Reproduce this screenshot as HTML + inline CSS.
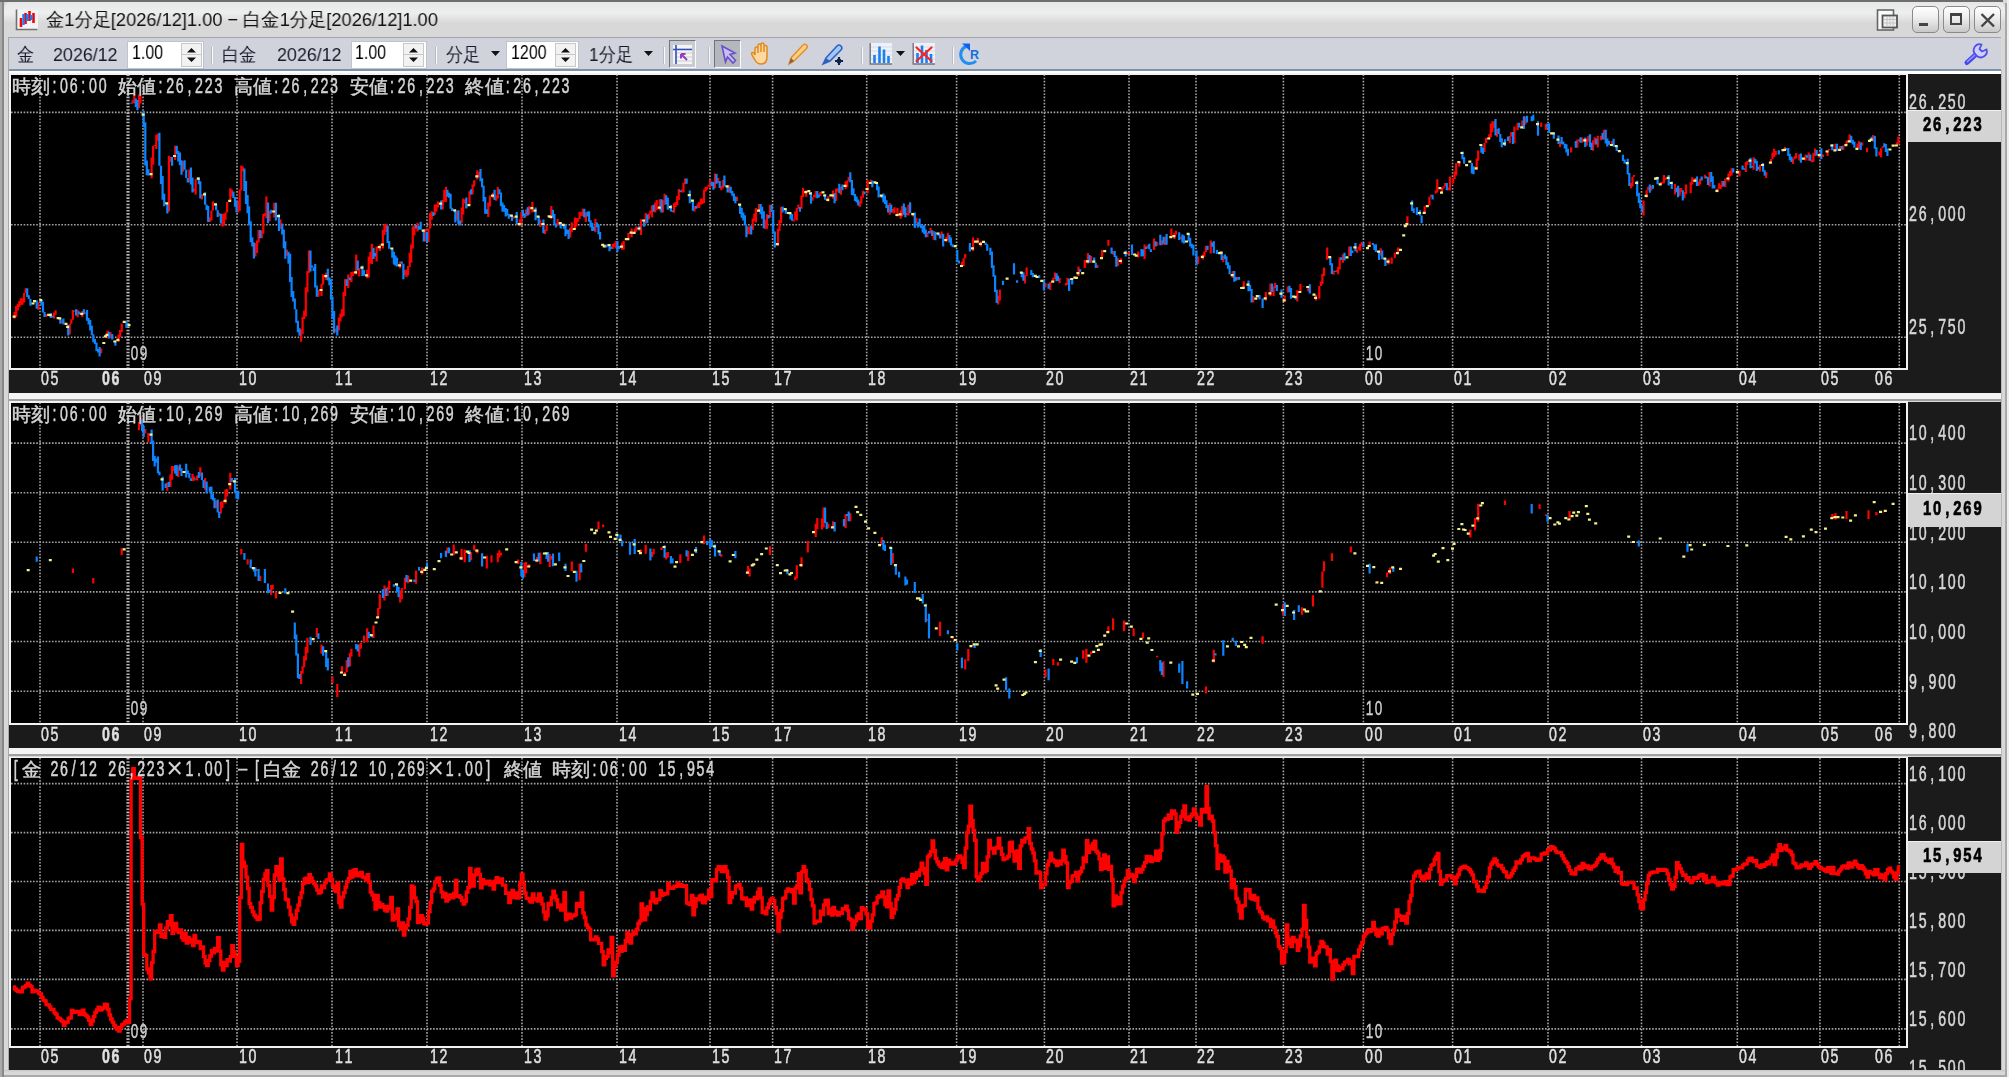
<!DOCTYPE html><html><head><meta charset="utf-8"><style>
*{margin:0;padding:0;box-sizing:border-box}
html,body{width:2009px;height:1080px;overflow:hidden;background:#fff;font-family:"Liberation Sans", sans-serif}
.a{position:absolute}
.mt{position:absolute;white-space:nowrap;font-family:"Liberation Sans", sans-serif;line-height:1;transform-origin:0 0;will-change:transform}
.mt i{display:inline-block;font-style:normal;text-align:center}
.tb{position:absolute;white-space:nowrap;font-family:"Liberation Sans", sans-serif;line-height:1;transform-origin:0 0;will-change:transform}
</style></head><body><div class="a" style="left:0;top:0;width:2009px;height:1077px;background:#d8d8d8"></div><div class="a" style="left:0;top:0;width:1.5px;height:1077px;background:#aaa"></div><div class="a" style="left:1.5px;top:0;width:2px;height:1077px;background:#888"></div><div class="a" style="left:7.5px;top:37px;width:1.2px;height:1036px;background:#a8a8a8"></div><div class="a" style="left:0;top:0;width:2003px;height:2px;background:#6e6e6e"></div><div class="a" style="left:0;top:1075px;width:2009px;height:2px;background:#a8a8a8"></div><div class="a" style="left:2004.5px;top:3px;width:2px;height:1074px;background:#a8a8a8"></div><div class="a" style="left:2006.5px;top:0;width:2.5px;height:1080px;background:#eceef2"></div><div class="a" style="left:2000px;top:70px;width:2px;height:1000px;background:#b8b8b8"></div><div class="a" style="left:3.5px;top:2px;width:2001px;height:35px;border-radius:6px 6px 0 0;background:linear-gradient(#e6e8e8 0px,#eeeeee 11px,#e4e4e4 16px,#d8d8d8 21px,#d8d8d8 35px)"></div><div class="a" style="left:9px;top:36.5px;width:1992px;height:1.2px;background:#a4a4a4"></div><div class="a" style="left:9px;top:37.7px;width:1992px;height:31.3px;background:#d0d3dc"></div><div class="a" style="left:9px;top:69px;width:1992px;height:1.8px;background:#8090a8"></div><div class="a" style="left:9px;top:70.8px;width:1992px;height:3.5px;background:#fff"></div><svg class="a" style="left:15px;top:8px" width="24" height="24" viewBox="0 0 24 24"><rect x="2" y="2" width="21" height="20" fill="#f4f4f4"/><path d="M1.5 1.5V21.5H22.5" stroke="#707070" stroke-width="1.6" fill="none"/><path d="M6 10V19M10.5 5V16M14.5 3V13M18.5 5V15" stroke="#ff0000" stroke-width="2.6"/><path d="M8.5 6V17M12.5 6V13M16.5 7V12" stroke="#0a84ff" stroke-width="2.4"/></svg><div class="tb" style="left:46px;top:9.5px;font-size:19px;color:#111;transform:scaleX(0.96)">金1分足[2026/12]1.00 &#8722; 白金1分足[2026/12]1.00</div><svg class="a" style="left:1875px;top:7px" width="28" height="26" viewBox="0 0 28 26"><rect x="2.5" y="3" width="16" height="20" fill="#fafafa" stroke="#666" stroke-width="1.6"/><rect x="7.5" y="8.5" width="14.5" height="12" fill="#eee" stroke="#555" stroke-width="1.8"/><path d="M9 12.5h12M9 16h12M12 10v10M15 10v10M18 10v10" stroke="#bbb" stroke-width="0.8"/></svg><div class="a" style="left:1911.5px;top:6px;width:27px;height:27px;border:1.3px solid #8a8a8a;border-radius:5px;background:linear-gradient(#ffffff,#f0f0f0 40%,#c8c8c8)"></div><div class="a" style="left:1919.0px;top:22.5px;width:9px;height:3px;background:#444"></div><div class="a" style="left:1942.6px;top:6px;width:27px;height:27px;border:1.3px solid #8a8a8a;border-radius:5px;background:linear-gradient(#ffffff,#f0f0f0 40%,#c8c8c8)"></div><div class="a" style="left:1949.8px;top:12.5px;width:12.5px;height:12px;border:2px solid #444;border-top-width:3px"></div><div class="a" style="left:1974px;top:6px;width:27px;height:27px;border:1.3px solid #8a8a8a;border-radius:5px;background:linear-gradient(#ffffff,#f0f0f0 40%,#c8c8c8)"></div><svg class="a" style="left:1974px;top:6px" width="27" height="27" viewBox="0 0 27 27"><path d="M7.5 8L20 20.5M20 8L7.5 20.5" stroke="#444" stroke-width="2.4"/></svg><div class="tb" style="left:17px;top:45px;font-size:19px;color:#1a1a2a;transform:scaleX(0.9)">金</div><div class="tb" style="left:53px;top:45px;font-size:19px;color:#1a1a2a;transform:scaleX(0.94)">2026/12</div><div class="a" style="left:127px;top:41px;width:77px;height:27.5px;background:#fff;border:1.2px solid #c0c4cc"></div><div class="tb" style="left:131.5px;top:42.5px;font-size:19.5px;color:#000;transform:scaleX(0.82)">1.00</div><div class="a" style="left:180.5px;top:43px;width:21px;height:23.5px;background:#f2f2f2;border:1.2px solid #c8c8c8"></div><div class="a" style="left:181.5px;top:54.3px;width:19px;height:1.2px;background:#c8c8c8"></div><svg class="a" style="left:180.5px;top:43px" width="21" height="24" viewBox="0 0 21 24"><path d="M6 9.5L10.5 5L15 9.5Z M6 14.5L10.5 19L15 14.5Z" fill="#111"/></svg><div class="a" style="left:211px;top:47px;width:1.2px;height:17px;background:#b8bcc4"></div><div class="a" style="left:212.2px;top:47px;width:1.2px;height:17px;background:#fafafa"></div><div class="tb" style="left:222px;top:45px;font-size:19px;color:#1a1a2a;transform:scaleX(0.9)">白金</div><div class="tb" style="left:277px;top:45px;font-size:19px;color:#1a1a2a;transform:scaleX(0.94)">2026/12</div><div class="a" style="left:350.5px;top:41px;width:76px;height:27.5px;background:#fff;border:1.2px solid #c0c4cc"></div><div class="tb" style="left:355.0px;top:42.5px;font-size:19.5px;color:#000;transform:scaleX(0.82)">1.00</div><div class="a" style="left:403.0px;top:43px;width:21px;height:23.5px;background:#f2f2f2;border:1.2px solid #c8c8c8"></div><div class="a" style="left:404.0px;top:54.3px;width:19px;height:1.2px;background:#c8c8c8"></div><svg class="a" style="left:403.0px;top:43px" width="21" height="24" viewBox="0 0 21 24"><path d="M6 9.5L10.5 5L15 9.5Z M6 14.5L10.5 19L15 14.5Z" fill="#111"/></svg><div class="a" style="left:435px;top:47px;width:1.2px;height:17px;background:#b8bcc4"></div><div class="a" style="left:436.2px;top:47px;width:1.2px;height:17px;background:#fafafa"></div><div class="tb" style="left:446px;top:45px;font-size:19px;color:#1a1a2a;transform:scaleX(0.9)">分足</div><svg class="a" style="left:491px;top:51px" width="9" height="6" viewBox="0 0 9 6"><path d="M0 0H9L4.5 5Z" fill="#111"/></svg><div class="a" style="left:506px;top:41px;width:72.5px;height:27.5px;background:#fff;border:1.2px solid #c0c4cc"></div><div class="tb" style="left:510.5px;top:42.5px;font-size:19.5px;color:#000;transform:scaleX(0.82)">1200</div><div class="a" style="left:555.0px;top:43px;width:21px;height:23.5px;background:#f2f2f2;border:1.2px solid #c8c8c8"></div><div class="a" style="left:556.0px;top:54.3px;width:19px;height:1.2px;background:#c8c8c8"></div><svg class="a" style="left:555.0px;top:43px" width="21" height="24" viewBox="0 0 21 24"><path d="M6 9.5L10.5 5L15 9.5Z M6 14.5L10.5 19L15 14.5Z" fill="#111"/></svg><div class="tb" style="left:589px;top:45px;font-size:19px;color:#1a1a2a;transform:scaleX(0.9)">1分足</div><svg class="a" style="left:644px;top:51px" width="9" height="6" viewBox="0 0 9 6"><path d="M0 0H9L4.5 5Z" fill="#111"/></svg><div class="a" style="left:663px;top:47px;width:1.2px;height:17px;background:#b8bcc4"></div><div class="a" style="left:664.2px;top:47px;width:1.2px;height:17px;background:#fafafa"></div><div class="a" style="left:669px;top:40px;width:27px;height:28px;background:#c8cbd2;border-top:1.6px solid #707478;border-left:1.6px solid #707478;border-bottom:1.2px solid #fafafa;border-right:1.2px solid #fafafa"></div><svg class="a" style="left:669px;top:40.5px" width="27" height="27" viewBox="0 0 27 27"><rect x="4" y="4" width="19" height="19" fill="#f4f4f4"/><path d="M6 8H23M6 12H23M6 16H23M6 20H23" stroke="#c8c8c8" stroke-width="0.9"/><path d="M7 4V23M4 8.5H23" stroke="#3050c0" stroke-width="1.6"/><path d="M12 13L18 19M12 13V17.5M12 13H16.5" stroke="#9040c0" stroke-width="2" fill="none"/></svg><div class="a" style="left:708px;top:47px;width:1.2px;height:17px;background:#b8bcc4"></div><div class="a" style="left:709.2px;top:47px;width:1.2px;height:17px;background:#fafafa"></div><div class="a" style="left:714px;top:40px;width:27px;height:28px;background:#b4b8be;border-top:1.6px solid #707478;border-left:1.6px solid #707478;border-bottom:1.2px solid #fafafa;border-right:1.2px solid #fafafa"></div><svg class="a" style="left:714px;top:40.5px" width="27" height="27" viewBox="0 0 27 27"><path d="M8 5L21 12L16 13.5L21.5 19.5L19 22L13.5 16L11.5 21Z" fill="#c8c0f4" stroke="#6a50c8" stroke-width="1.6"/></svg><svg class="a" style="left:749px;top:40px" width="26" height="28" viewBox="0 0 26 28"><path d="M6 15V9Q6 7 7.5 7Q9 7 9 9V13V6Q9 4 10.5 4Q12 4 12 6V12V5Q12 3 13.5 3Q15 3 15 5V12V7Q15 5.5 16.5 5.5Q18 5.5 18 7V17Q18 24 12 24Q8 24 6 20L3 15Q2 13 3.5 12.5Q5 12 6 15Z" fill="#ffd8a0" stroke="#e08a20" stroke-width="1.5"/></svg><svg class="a" style="left:785px;top:40px" width="26" height="28" viewBox="0 0 26 28"><path d="M4 24L6 18L18 5Q20 3.5 21.5 5Q23 6.5 21.5 8.5L9 21Z" fill="#ffd080" stroke="#e09030" stroke-width="1.5"/><path d="M4 24L6 18L9 21Z" fill="#806040"/></svg><svg class="a" style="left:820px;top:40px" width="28" height="28" viewBox="0 0 28 28"><path d="M3 24L6 18L17 6Q19 4 21 6Q23 8 21 10L10 21Z" fill="#a0c8f8" stroke="#3060c0" stroke-width="1.5"/><path d="M3 24L6 18L10 21Z" fill="#3060c0"/><path d="M19 17V25M15 21H23" stroke="#102050" stroke-width="2.2"/><path d="M17 19h4v4h-4z" fill="#102050"/></svg><div class="a" style="left:861px;top:47px;width:1.2px;height:17px;background:#b8bcc4"></div><div class="a" style="left:862.2px;top:47px;width:1.2px;height:17px;background:#fafafa"></div><svg class="a" style="left:869px;top:41px" width="24" height="26" viewBox="0 0 24 26"><rect x="1" y="2" width="22" height="21" fill="#eef2f8"/><path d="M2 6H23M2 10H23M2 14H23M2 18H23" stroke="#d0d4dc" stroke-width="0.8"/><path d="M1.2 2V23H23" stroke="#707480" stroke-width="1.4" fill="none"/><path d="M5.5 22V14M10.5 22V5.5M15 22V8.5M19.5 22V15" stroke="#1a80f0" stroke-width="2.6"/></svg><svg class="a" style="left:896px;top:51px" width="9" height="6" viewBox="0 0 9 6"><path d="M0 0H9L4.5 5Z" fill="#111"/></svg><svg class="a" style="left:912px;top:41px" width="24" height="26" viewBox="0 0 24 26"><rect x="1" y="2" width="22" height="21" fill="#eef2f8"/><path d="M2 6H23M2 10H23M2 14H23M2 18H23" stroke="#d0d4dc" stroke-width="0.8"/><path d="M1.2 2V23H23" stroke="#707480" stroke-width="1.4" fill="none"/><path d="M5.5 22V12M10 22V4.5M14.5 22V9M19 22V13" stroke="#1a80f0" stroke-width="2.6"/><path d="M4.5 6.5L19.5 20M19.5 6.5L4.5 20" stroke="#ff2020" stroke-width="2.2" stroke-linecap="round"/></svg><div class="a" style="left:952px;top:47px;width:1.2px;height:17px;background:#b8bcc4"></div><div class="a" style="left:953.2px;top:47px;width:1.2px;height:17px;background:#fafafa"></div><svg class="a" style="left:957px;top:41px" width="26" height="26" viewBox="0 0 26 26"><path d="M10 5A9 9 0 1 0 19 20" stroke="#2090f0" stroke-width="3" fill="none"/><path d="M5 2.5H13V10Z" fill="#1060f0"/><text x="13" y="17.5" font-family="Liberation Sans" font-weight="bold" font-size="12.5" fill="#1070e0">R</text></svg><svg class="a" style="left:1962px;top:41px" width="28" height="26" viewBox="0 0 28 26"><path d="M5 21.5L15 12.5" stroke="#4848f0" stroke-width="5" stroke-linecap="round"/><path d="M5.5 20.5L14 13" stroke="#9898ff" stroke-width="1.6" stroke-linecap="round"/><path d="M13.5 13.5A6 6 0 0 1 19.5 3.5L17.5 8L20 10.5L24.5 8.5A6 6 0 0 1 15 15Z" fill="#d0d0ff" stroke="#5050e8" stroke-width="1.8"/></svg><div class="a" style="left:9px;top:73.5px;width:1992px;height:319.3px;background:#1b1b1b"></div><div class="a" style="left:9.3px;top:73.0px;width:1898.3px;height:296.8px;background:#f2f2f2"></div><div class="a" style="left:11px;top:74.5px;width:1895px;height:293.8px;background:#000"></div><svg class="a" style="left:0;top:0" width="2009" height="1080" viewBox="0 0 2009 1080"><defs><clipPath id="c74"><rect x="11" y="74.5" width="1895" height="293.8"/></clipPath></defs><g clip-path="url(#c74)"><path d="M40 74.5V368.3 M143 74.5V368.3 M237 74.5V368.3 M332 74.5V368.3 M427 74.5V368.3 M522 74.5V368.3 M617 74.5V368.3 M710 74.5V368.3 M772.6 74.5V368.3 M866.7 74.5V368.3 M956.6 74.5V368.3 M1044.4 74.5V368.3 M1129 74.5V368.3 M1196 74.5V368.3 M1283.4 74.5V368.3 M1363.4 74.5V368.3 M1452.6 74.5V368.3 M1548 74.5V368.3 M1641.5 74.5V368.3 M1737.3 74.5V368.3 M1819.9 74.5V368.3 M1899.3 74.5V368.3 M11 112.4H1906 M11 224.8H1906 M11 337.2H1906" stroke="#a4a4a4" stroke-width="1.6" stroke-dasharray="1.6 1.55" fill="none"/><path d="M128 74.5V368.3" stroke="#b4b4b4" stroke-width="3.2" stroke-dasharray="1.6 1.55" fill="none"/><path d="M14.6 312.0V318.4M16.2 306.1V317.0M17.8 303.8V310.5M19.4 301.1V307.1M20.9 298.2V304.9M22.5 298.2V304.8M24.1 292.9V302.6M25.7 288.2V292.9M35.1 300.3V302.3M38.3 302.2V309.8M46.1 314.0V317.1M54.0 312.6V318.6M55.6 310.3V314.8M61.9 320.2V323.2M69.7 323.7V334.4M71.3 319.2V323.7M72.9 310.1V319.7M77.6 309.8V317.2M82.3 310.9V317.1M85.5 312.3V314.3M101.2 348.4V353.2M107.5 330.6V338.2M110.6 332.2V337.9M118.5 334.7V342.0M120.1 330.1V336.9M121.7 323.6V332.3M132.7 100.2V103.5M134.3 94.6V103.2M139.0 94.6V108.3M140.5 95.8V103.6M151.6 157.6V178.2M153.1 145.9V164.6M154.7 144.9V145.9M156.3 134.7V148.9M157.9 133.7V140.7M168.9 155.7V211.6M170.4 157.1V161.7M175.2 145.8V160.0M183.0 161.3V171.7M189.3 169.4V182.4M194.1 188.7V191.5M195.6 179.2V194.7M201.9 194.3V199.6M209.8 217.6V221.9M211.4 210.4V220.6M212.9 201.4V210.4M219.2 212.7V216.0M222.4 213.8V226.6M224.0 213.8V225.8M225.5 212.4V219.8M227.1 202.1V212.4M230.3 188.2V200.8M231.8 189.5V196.2M238.1 200.8V212.4M239.7 189.6V210.8M241.3 165.6V190.6M242.8 166.6V171.6M255.4 243.1V256.4M257.0 240.4V253.1M258.6 230.0V242.4M261.7 230.8V238.2M263.3 214.1V233.8M264.9 213.3V216.1M266.4 196.6V218.3M269.6 210.8V221.3M274.3 202.8V217.5M280.6 219.6V229.0M286.9 249.7V255.7M301.1 329.2V341.7M302.6 316.9V334.2M304.2 310.5V318.9M305.8 287.2V316.5M307.4 271.0V292.2M308.9 250.6V273.0M318.4 290.0V296.8M321.5 283.8V296.0M323.1 274.2V284.8M326.2 272.7V280.1M335.7 328.4V332.2M338.8 317.5V330.5M340.4 313.6V321.5M342.0 308.9V317.6M343.6 291.9V315.9M345.1 279.2V295.9M348.3 274.4V288.0M351.4 272.1V282.2M353.0 271.6V276.1M356.2 254.6V274.4M359.3 268.0V276.5M367.2 269.8V278.3M368.7 256.4V277.8M370.3 252.0V263.4M371.9 243.7V264.0M376.6 246.4V261.5M379.8 244.4V251.1M382.9 229.9V248.6M384.5 224.1V234.9M386.1 223.7V232.1M400.2 261.6V268.3M404.9 270.3V275.3M406.5 269.5V277.3M408.1 265.9V275.5M409.7 252.7V266.9M411.2 244.5V262.7M412.8 226.6V248.5M414.4 225.1V235.6M417.5 222.8V231.5M425.4 229.0V241.6M428.5 228.5V242.1M430.1 212.7V228.5M431.7 211.2V219.7M434.8 204.6V214.9M436.4 204.4V211.6M438.0 201.5V207.4M442.7 199.9V209.5M444.3 190.0V201.9M445.9 186.8V202.0M456.9 211.2V220.4M461.6 207.5V223.5M463.2 198.6V214.5M464.7 199.6V203.6M469.5 191.3V205.1M472.6 184.5V194.6M474.2 180.3V186.5M477.3 170.2V179.4M478.9 172.1V177.2M488.3 202.6V217.1M489.9 195.6V206.4M493.1 192.7V198.6M496.2 195.6V200.7M497.8 187.0V198.6M513.5 216.3V218.7M519.8 219.2V226.3M521.4 211.9V223.0M526.1 209.4V216.5M529.3 206.2V214.6M532.4 201.9V212.6M540.3 219.7V227.1M545.0 229.6V234.0M546.6 225.1V231.1M551.3 206.1V219.1M557.6 219.1V226.0M570.2 227.7V237.6M571.8 222.3V232.2M574.9 217.6V229.0M576.5 218.0V226.6M578.0 218.2V221.8M579.6 211.8V219.0M581.2 211.8V216.3M582.8 208.8V216.3M585.9 212.4V222.0M595.4 218.9V232.2M604.8 244.6V246.4M612.7 244.0V249.0M614.2 243.2V247.0M615.8 241.1V248.4M622.1 242.6V249.7M623.7 241.0V249.4M628.4 232.9V239.8M631.6 228.6V237.2M634.7 228.8V232.8M636.3 226.6V231.8M641.0 219.3V235.1M645.7 212.9V223.8M648.9 213.5V219.3M650.4 210.5V214.2M652.0 205.6V217.2M655.2 202.4V212.5M656.7 199.9V209.9M659.9 199.3V210.6M663.0 200.3V212.4M664.6 193.8V204.8M674.0 203.2V212.7M675.6 202.0V206.9M677.2 196.1V205.0M678.8 188.9V199.9M681.9 189.4V192.2M683.5 182.7V192.4M685.1 178.5V184.2M694.5 205.9V211.5M697.7 203.6V207.9M699.2 201.7V208.1M700.8 198.7V204.7M702.4 198.6V204.0M704.0 189.4V203.1M705.5 186.8V191.7M707.1 186.8V189.8M708.7 184.7V186.8M710.2 179.4V187.7M715.0 173.4V188.3M718.1 177.9V182.9M721.3 186.1V190.2M722.8 180.0V188.4M729.1 185.2V192.5M737.0 196.8V201.1M748.0 226.7V234.2M749.6 226.2V234.2M752.7 218.6V229.9M754.3 213.4V220.9M755.9 208.1V222.4M759.0 204.1V211.5M765.3 219.8V229.0M766.9 214.3V228.8M770.0 204.7V217.8M777.9 228.7V245.7M779.5 219.9V231.0M781.1 207.1V222.9M793.7 219.4V221.5M795.2 211.4V219.4M796.8 208.1V220.4M798.4 204.6V208.8M801.5 195.5V208.8M803.1 188.1V197.0M806.2 190.2V196.7M812.5 196.9V200.8M814.1 194.7V196.9M815.7 190.9V197.7M820.4 192.0V196.1M828.3 196.3V201.4M833.0 190.6V198.5M836.1 188.8V201.0M837.7 188.2V191.8M840.9 186.7V194.8M845.6 181.3V188.9M847.2 180.6V187.3M848.7 176.7V181.3M859.8 201.2V207.1M861.3 196.2V203.4M862.9 190.8V197.7M867.6 180.0V193.5M870.8 179.8V183.0M889.7 203.1V214.8M892.8 208.9V212.6M894.4 207.3V213.4M897.5 208.1V216.5M900.7 210.6V218.8M902.2 205.9V216.6M907.0 213.1V215.0M908.5 204.6V215.4M913.3 213.1V216.4M916.4 217.7V223.6M927.4 232.6V237.2M930.6 228.0V233.6M933.7 231.0V239.8M941.6 231.5V238.4M946.3 237.1V242.2M947.9 232.8V240.1M962.0 261.7V266.0M963.6 258.2V265.9M965.2 254.1V258.2M973.1 237.5V251.1M977.8 238.0V243.6M980.9 241.6V246.6M998.2 295.7V304.5M999.8 289.4V300.6M1025.0 275.3V283.6M1026.6 267.6V276.0M1045.5 282.7V287.6M1050.2 281.9V290.1M1053.3 277.7V281.7M1054.9 272.6V279.1M1059.6 277.8V283.0M1065.9 283.0V285.5M1067.5 278.1V285.1M1078.5 266.5V276.0M1084.8 260.0V267.9M1087.9 253.0V263.5M1091.1 255.9V262.7M1097.4 264.9V267.9M1102.1 250.1V258.2M1108.4 240.1V245.8M1113.1 250.9V254.5M1117.8 258.1V266.1M1121.0 258.2V263.8M1127.3 252.6V254.4M1128.9 251.7V254.0M1138.3 251.5V257.4M1144.6 244.6V259.1M1147.7 245.2V248.3M1154.0 238.4V250.0M1157.2 241.9V245.7M1161.9 240.2V245.3M1165.1 236.7V244.9M1171.4 228.5V237.1M1174.5 233.1V239.0M1176.1 230.8V234.5M1180.8 236.7V239.3M1198.1 256.4V264.1M1202.8 254.6V259.6M1204.4 251.4V256.7M1206.0 245.7V252.1M1210.7 240.4V253.4M1223.3 255.8V262.2M1232.7 270.9V277.9M1237.5 277.1V280.1M1243.7 281.2V287.9M1253.2 296.1V302.4M1265.8 292.1V300.4M1270.5 283.5V296.2M1273.6 286.5V296.1M1275.2 283.0V287.9M1284.7 295.6V301.7M1287.8 286.4V292.6M1297.3 290.2V301.6M1300.4 284.1V292.0M1303.5 286.4V287.1M1308.3 286.3V291.2M1316.1 295.1V300.6M1319.3 286.1V298.8M1320.9 281.4V286.1M1322.4 273.8V284.2M1324.0 267.4V275.9M1327.2 247.4V259.7M1333.5 270.5V274.7M1336.6 270.0V272.0M1338.2 266.8V274.2M1339.7 257.3V269.6M1342.9 254.2V262.7M1349.2 246.4V256.1M1357.1 249.6V252.7M1358.6 246.6V249.6M1360.2 244.1V250.8M1361.8 242.1V246.2M1369.6 241.5V246.7M1380.7 248.3V255.8M1388.5 258.4V264.5M1391.7 257.4V263.8M1394.8 252.7V258.1M1398.0 247.5V253.1M1407.4 216.3V225.6M1424.7 206.3V212.9M1429.4 196.7V205.5M1431.0 194.7V196.7M1435.7 190.4V193.6M1437.3 179.3V192.6M1442.0 187.9V192.7M1443.6 186.2V188.6M1445.2 183.1V186.2M1448.3 187.5V190.2M1449.9 176.5V190.4M1453.1 178.4V183.4M1454.6 171.2V179.1M1456.2 163.3V175.6M1459.3 161.3V166.6M1476.7 158.6V169.8M1478.2 150.5V160.8M1484.5 143.1V151.9M1486.1 137.8V143.1M1489.3 134.3V138.5M1490.8 123.6V137.2M1492.4 121.3V132.3M1494.0 121.2V127.8M1497.1 129.1V136.8M1509.7 135.9V143.2M1511.3 132.1V136.6M1514.4 126.5V143.3M1517.6 122.7V130.3M1522.3 120.5V127.3M1525.4 116.4V124.6M1541.2 122.6V126.9M1545.9 123.8V129.9M1560.1 141.3V146.9M1571.1 147.2V152.6M1577.4 139.4V147.8M1579.0 139.3V141.5M1582.1 137.6V142.7M1586.8 138.6V145.7M1588.4 135.8V141.5M1593.1 140.2V150.8M1594.7 137.2V144.6M1597.8 135.8V147.5M1601.0 135.7V140.3M1604.1 129.7V139.4M1612.0 141.0V145.0M1630.9 183.0V188.3M1632.5 176.7V186.6M1634.0 175.1V176.7M1643.5 200.6V215.4M1646.6 190.2V197.4M1648.2 186.7V190.2M1651.3 185.7V190.6M1660.8 182.0V184.4M1662.4 181.8V183.4M1663.9 175.0V183.3M1665.5 177.7V180.0M1675.0 184.1V194.5M1679.7 188.0V195.7M1681.2 188.0V192.3M1684.4 191.9V198.3M1686.0 184.4V194.1M1690.7 182.2V193.2M1692.3 177.3V184.4M1695.4 177.9V182.2M1698.6 181.7V186.0M1700.1 178.7V184.6M1704.9 174.8V178.5M1709.6 172.0V186.5M1717.4 188.7V192.3M1719.0 183.2V188.7M1720.6 184.9V189.0M1722.2 181.0V187.0M1725.3 178.6V186.9M1728.5 173.5V181.4M1730.0 171.1V176.4M1731.6 168.3V175.5M1739.5 170.6V176.6M1745.8 162.0V172.0M1747.3 161.0V164.9M1753.6 157.3V169.8M1759.9 164.8V171.6M1766.2 172.1V178.0M1771.0 158.9V162.6M1772.5 152.6V158.9M1774.1 148.8V157.0M1775.7 151.0V155.3M1785.1 146.9V149.8M1793.0 158.4V164.1M1794.6 156.2V159.2M1796.1 152.9V158.4M1799.3 154.3V160.6M1805.6 154.5V160.6M1808.7 152.4V160.7M1811.9 159.8V162.3M1813.4 153.0V161.9M1815.0 148.5V155.9M1819.7 152.6V158.1M1822.9 154.4V156.9M1827.6 150.2V155.9M1829.2 148.9V150.2M1835.5 143.7V150.4M1840.2 146.1V149.8M1843.3 145.5V150.1M1846.5 140.6V145.2M1849.6 134.2V142.0M1857.5 143.6V148.8M1859.1 141.1V148.7M1862.2 142.6V145.5M1867.0 147.7V152.2M1873.2 135.1V141.6M1879.5 151.5V155.5M1881.1 148.2V157.3M1882.7 146.2V148.2M1893.7 145.1V145.6M1896.9 142.3V146.2M1898.4 136.4V144.4" stroke="#ff0000" stroke-width="2.2" fill="none"/><path d="M27.2 288.2V296.9M28.8 295.2V299.0M30.4 299.0V305.7M36.7 300.3V308.7M41.4 300.1V305.5M43.0 301.7V312.6M44.5 312.1V317.1M50.8 312.9V317.9M52.4 315.7V317.5M60.3 317.8V323.8M63.4 318.6V324.4M68.2 325.1V335.5M74.5 310.7V311.4M76.0 309.2V315.6M79.2 311.5V314.6M83.9 309.2V314.3M87.0 310.1V320.8M88.6 318.0V324.5M90.2 320.1V330.6M91.8 325.7V335.3M93.3 334.2V342.2M94.9 338.9V344.1M96.5 342.5V351.1M98.1 348.9V352.6M99.6 347.1V356.5M109.1 331.7V338.4M112.2 333.9V339.4M115.4 340.4V345.7M124.8 321.8V322.8M126.4 321.2V327.8M131.1 102.8V103.5M135.8 98.6V107.0M137.4 100.0V110.3M143.7 110.7V127.2M145.3 122.2V165.6M146.8 160.6V175.2M148.4 169.2V175.4M159.4 132.7V165.7M161.0 165.7V184.0M162.6 176.0V199.7M164.2 193.7V206.2M167.3 203.4V213.6M172.0 157.1V165.7M176.7 145.8V154.1M178.3 151.1V161.5M179.9 152.5V165.3M181.5 160.3V174.7M184.6 160.3V169.8M186.2 169.8V178.1M187.8 178.1V182.4M190.9 167.4V184.4M192.5 177.4V192.5M198.8 177.6V184.3M200.3 181.3V198.6M205.1 192.3V204.7M206.6 204.7V209.9M208.2 205.9V221.9M216.1 204.4V210.3M217.7 210.3V217.0M220.8 213.7V223.6M233.4 191.5V197.9M235.0 196.9V206.8M236.5 200.8V212.4M244.4 168.6V190.9M246.0 180.9V203.9M247.6 194.9V213.2M249.1 206.2V225.3M250.7 221.3V242.2M252.3 237.2V246.5M253.9 242.5V258.4M260.2 230.0V238.2M268.0 202.6V223.3M271.2 209.8V213.5M275.9 202.8V220.4M279.0 214.2V231.0M282.2 223.6V234.5M283.8 229.5V248.3M285.3 241.3V258.7M288.5 251.7V263.7M290.1 253.7V282.0M291.6 277.0V297.0M293.2 291.0V301.4M294.8 298.4V309.2M296.3 309.2V322.8M297.9 320.8V332.3M299.5 328.3V335.7M310.5 250.6V271.4M312.1 265.4V267.2M313.7 267.2V271.0M315.2 264.0V287.5M316.8 285.5V296.8M327.8 268.7V280.5M329.4 277.5V285.3M331.0 279.3V299.7M332.5 296.7V318.9M334.1 310.9V333.2M337.3 325.4V335.5M346.7 279.2V286.0M349.9 277.4V280.2M357.7 260.6V270.5M362.4 265.7V275.9M364.0 269.9V275.8M373.5 247.7V258.9M375.0 252.9V256.5M387.6 225.7V243.1M389.2 241.1V248.7M392.3 248.5V257.7M393.9 251.7V264.4M395.5 255.4V265.8M397.1 257.8V266.6M401.8 261.6V263.8M403.4 263.8V279.3M416.0 225.1V228.5M419.1 225.8V229.8M420.7 221.8V229.8M423.8 229.6V241.6M427.0 232.0V242.1M433.3 212.2V215.9M441.1 200.6V209.5M447.4 189.8V196.8M449.0 192.8V197.8M450.6 193.8V208.8M452.1 207.8V210.9M455.3 210.4V222.4M458.4 210.2V224.5M460.0 220.5V225.5M466.3 197.6V208.6M471.0 189.3V194.6M480.5 169.1V181.2M482.1 178.2V187.3M483.6 185.8V201.5M485.2 197.0V213.7M486.8 209.2V214.1M494.6 189.7V200.0M499.4 189.3V194.1M500.9 192.6V206.3M502.5 202.5V211.7M504.1 204.9V211.8M505.7 208.1V216.4M507.2 208.9V215.6M508.8 214.1V218.8M512.0 215.7V221.0M516.7 212.1V224.4M523.0 209.7V216.2M524.5 213.2V218.0M527.7 207.2V215.4M535.6 207.6V220.2M538.7 216.7V224.9M543.4 219.5V233.2M552.9 209.8V217.7M554.4 213.9V225.1M556.0 223.6V227.5M560.7 222.4V228.4M563.9 224.9V228.8M565.5 224.3V236.2M567.0 229.4V234.1M568.6 229.6V239.1M584.3 208.8V217.5M587.5 211.6V216.6M589.1 211.3V221.8M590.6 220.3V227.2M592.2 222.7V231.1M593.8 226.6V230.7M596.9 222.6V227.3M598.5 224.3V234.3M600.1 232.1V239.5M606.4 244.6V247.5M609.5 244.3V251.3M611.1 246.8V249.0M617.4 241.1V252.0M619.0 246.0V249.1M639.4 226.3V230.6M644.1 219.7V226.8M647.3 214.4V223.0M653.6 204.8V211.7M661.5 199.3V212.4M666.2 195.3V204.4M667.8 197.7V209.8M670.9 204.9V211.4M672.5 210.6V211.9M680.3 190.4V192.2M686.6 178.5V183.8M689.8 190.6V203.3M692.9 200.7V210.8M696.1 205.9V208.7M711.8 181.7V185.9M713.4 182.1V189.8M716.5 174.1V183.7M719.7 180.9V187.9M724.4 175.5V186.6M727.6 186.3V192.5M730.7 186.7V193.2M732.3 191.0V195.7M733.9 193.5V201.1M735.4 196.6V203.3M740.1 204.6V213.9M741.7 207.9V217.8M743.3 212.6V220.5M744.9 215.2V225.4M746.4 225.4V237.2M751.2 225.4V234.4M760.6 204.1V214.2M762.2 206.7V218.8M763.8 211.3V228.3M768.5 215.0V218.6M771.6 204.7V212.1M773.2 209.9V233.7M774.8 231.4V247.6M782.6 206.4V212.5M785.8 209.1V213.8M790.5 213.1V219.2M792.1 214.0V220.7M799.9 206.9V211.8M811.0 192.0V203.8M817.3 190.9V198.3M818.8 194.6V197.6M825.1 194.0V199.7M834.6 192.9V203.3M839.3 183.7V193.3M842.4 184.4V190.3M850.3 172.2V182.2M851.9 180.0V194.9M853.5 188.2V195.5M855.0 194.0V200.9M856.6 196.4V202.6M858.2 199.6V205.6M864.5 191.6V194.2M872.3 180.5V187.2M877.1 182.3V190.2M878.6 186.5V197.5M881.8 195.6V197.9M883.4 193.4V202.2M884.9 195.5V204.0M886.5 200.3V208.0M888.1 205.0V212.6M891.2 204.6V212.6M903.8 203.6V214.7M905.4 207.2V217.2M910.1 202.3V213.1M914.8 212.4V228.1M918.0 222.2V227.5M919.6 218.5V226.6M921.1 224.4V228.2M922.7 226.0V232.4M924.3 224.9V233.9M925.8 229.4V237.2M929.0 231.1V233.6M932.1 230.3V236.0M935.3 231.8V240.3M938.4 232.7V235.7M940.0 234.2V238.4M943.2 233.7V246.4M949.5 235.1V242.5M951.0 237.4V245.6M952.6 244.2V247.2M957.3 249.9V261.9M958.9 260.5V263.4M969.9 242.9V251.4M985.7 242.4V244.9M987.2 244.2V250.7M990.4 247.8V255.0M991.9 251.5V268.1M993.5 265.3V276.7M995.1 275.3V291.9M996.7 289.8V303.1M1003.0 280.8V284.9M1014.0 263.2V274.4M1017.1 280.2V282.7M1021.8 272.6V277.2M1023.4 272.3V280.8M1031.3 270.0V275.1M1032.9 273.0V277.3M1039.2 275.3V278.1M1043.9 279.8V290.4M1048.6 283.4V288.7M1056.5 273.3V281.3M1058.0 275.7V280.9M1069.1 278.8V290.9M1072.2 278.3V284.5M1080.1 269.3V271.8M1089.5 255.1V262.7M1094.2 257.4V262.8M1095.8 262.8V267.9M1111.6 247.6V253.8M1114.7 250.9V257.1M1116.3 255.7V266.8M1125.7 250.8V256.5M1132.0 244.5V255.0M1141.5 249.0V256.6M1143.0 249.6V256.3M1146.2 246.7V249.0M1149.3 243.8V249.2M1150.9 249.2V251.9M1155.6 241.2V246.4M1160.3 234.8V245.3M1163.5 236.7V244.2M1166.6 233.9V244.7M1179.2 232.3V240.0M1182.4 234.6V242.6M1183.9 235.6V243.6M1188.7 233.8V241.4M1190.2 237.9V246.6M1191.8 243.8V248.2M1193.4 244.7V255.6M1196.5 250.4V265.5M1207.5 245.7V250.0M1212.3 242.5V246.8M1213.8 241.2V253.3M1217.0 250.1V254.1M1221.7 252.0V260.1M1224.9 254.4V259.1M1226.4 256.3V265.0M1228.0 262.2V268.8M1229.6 265.3V274.3M1234.3 270.9V281.8M1235.9 276.9V280.8M1239.0 277.1V279.8M1248.5 280.4V291.3M1250.0 285.0V291.1M1251.6 289.0V302.4M1259.5 295.0V299.4M1262.6 298.4V307.9M1272.1 283.5V291.9M1276.8 285.1V290.9M1281.5 289.5V297.7M1289.4 285.7V292.3M1291.0 288.1V298.8M1295.7 296.8V299.5M1309.8 284.2V293.6M1330.3 257.1V265.3M1331.9 263.2V274.0M1335.0 271.2V272.0M1341.3 257.3V259.9M1344.5 252.8V260.6M1350.8 246.4V256.0M1352.3 250.4V253.0M1355.5 243.1V251.3M1363.4 242.8V246.9M1372.8 242.9V245.1M1374.4 244.4V249.9M1375.9 244.3V251.9M1379.1 251.6V260.0M1382.2 250.4V259.2M1385.4 258.7V266.0M1412.1 200.5V211.0M1413.7 208.2V213.0M1416.9 207.3V214.9M1420.0 210.2V215.5M1421.6 215.5V223.3M1432.6 194.7V199.6M1446.8 183.1V190.2M1462.5 151.6V159.3M1464.1 157.1V163.8M1471.9 163.1V173.4M1473.5 166.2V174.2M1481.4 145.0V152.8M1483.0 147.7V154.1M1495.5 119.0V135.4M1498.7 128.3V133.9M1500.3 133.9V142.0M1501.8 138.3V147.2M1505.0 139.3V145.9M1508.1 136.6V141.0M1512.9 132.1V144.0M1519.2 122.7V127.6M1523.9 116.2V128.9M1527.0 115.7V122.6M1531.7 116.3V121.2M1533.3 114.7V120.7M1538.0 121.3V135.8M1547.5 123.8V127.7M1549.1 123.3V133.0M1553.8 132.0V138.7M1558.5 135.4V144.0M1561.6 136.9V144.3M1563.2 141.4V144.5M1564.8 143.8V148.6M1566.4 144.2V152.4M1567.9 148.7V155.7M1575.8 141.1V147.8M1580.5 137.2V142.7M1585.2 137.5V147.1M1590.0 134.3V147.1M1591.5 142.8V150.1M1596.3 138.6V144.6M1602.6 132.8V139.4M1605.7 129.7V143.5M1607.3 138.4V146.5M1608.9 140.7V144.8M1613.6 138.8V146.7M1616.7 145.4V151.0M1623.0 154.8V161.0M1624.6 159.5V163.5M1627.7 158.8V174.5M1629.3 173.0V186.1M1637.2 180.7V196.3M1638.8 192.7V203.1M1640.3 199.5V208.3M1641.9 205.4V212.5M1649.8 184.5V192.8M1652.9 185.0V188.8M1657.6 176.8V184.3M1668.7 174.9V185.5M1671.8 181.5V189.1M1676.5 187.7V192.3M1678.1 185.8V197.2M1682.8 190.2V200.5M1697.0 176.5V186.0M1701.7 176.5V180.6M1706.4 176.3V178.6M1708.0 177.2V185.0M1711.2 172.0V182.0M1712.7 176.2V188.6M1714.3 185.0V188.5M1723.7 181.0V186.2M1733.2 168.3V172.4M1737.9 172.2V173.7M1742.6 165.5V169.7M1744.2 168.2V169.8M1750.5 157.8V168.3M1752.1 166.1V167.6M1755.2 158.8V163.6M1756.8 160.7V171.0M1758.4 166.7V169.4M1763.1 162.9V171.7M1764.7 170.3V175.8M1778.8 150.3V154.5M1786.7 148.3V150.2M1788.3 148.1V155.9M1789.8 153.8V160.2M1791.4 156.6V161.9M1800.9 153.6V162.8M1807.1 155.2V157.8M1810.3 154.6V160.8M1816.6 150.0V155.6M1821.3 148.2V159.1M1832.3 144.1V150.2M1837.0 143.7V150.8M1841.8 146.1V149.4M1851.2 135.7V142.7M1852.8 139.8V144.4M1854.4 141.5V147.8M1860.7 142.6V149.9M1871.7 136.8V140.9M1874.8 135.9V148.7M1876.4 147.3V156.4M1884.3 143.3V146.9M1885.8 144.0V152.0M1887.4 148.4V156.0" stroke="#0a84ff" stroke-width="2.2" fill="none"/><path d="M12.6 316.7h3M31.5 303.5h3M33.0 301.2h3M39.3 300.1h3M47.2 314.9h3M48.8 315.1h3M56.6 318.1h3M58.2 318.3h3M64.5 323.9h3M66.1 326.8h3M80.2 313.8h3M102.3 343.0h3M103.9 336.4h3M105.4 334.9h3M113.3 341.5h3M116.4 339.8h3M122.7 321.8h3M127.5 325.2h3M141.6 114.7h3M149.5 174.2h3M165.2 203.4h3M173.1 156.0h3M196.7 178.6h3M203.0 194.3h3M214.0 204.4h3M228.2 200.8h3M272.2 211.5h3M277.0 216.2h3M319.5 290.0h3M324.2 276.1h3M354.1 272.4h3M360.4 267.7h3M365.1 275.3h3M377.7 247.1h3M380.8 244.6h3M390.3 248.5h3M398.1 265.3h3M421.7 230.6h3M439.1 203.6h3M453.2 210.4h3M467.4 205.1h3M475.3 176.4h3M491.0 195.6h3M509.9 215.7h3M514.6 216.6h3M517.7 224.1h3M530.3 208.1h3M533.5 210.6h3M536.6 216.7h3M541.4 224.0h3M547.6 216.3h3M549.2 216.8h3M558.7 223.2h3M561.8 224.9h3M572.8 229.0h3M601.2 244.8h3M602.7 246.4h3M607.5 245.1h3M620.0 246.7h3M624.8 239.2h3M626.3 239.1h3M629.5 232.7h3M632.6 232.8h3M637.4 228.5h3M642.1 220.5h3M657.8 207.6h3M668.8 207.1h3M687.7 195.1h3M690.9 200.7h3M725.5 186.3h3M738.1 204.6h3M757.0 210.7h3M775.8 244.2h3M783.7 209.1h3M786.9 213.0h3M788.4 213.1h3M804.2 192.2h3M807.3 191.1h3M808.9 193.5h3M821.5 192.4h3M823.1 195.5h3M826.2 199.9h3M829.4 195.4h3M830.9 195.5h3M843.5 185.9h3M865.5 189.0h3M868.7 183.0h3M873.4 182.3h3M875.0 183.0h3M879.7 195.6h3M895.4 215.0h3M898.6 214.3h3M911.2 214.2h3M936.4 233.5h3M944.2 240.0h3M953.7 246.1h3M960.0 266.0h3M971.0 248.3h3M974.1 241.7h3M975.7 241.5h3M978.9 243.8h3M982.0 241.8h3M1005.6 278.6h3M1019.8 272.6h3M1033.9 275.9h3M1035.5 277.0h3M1040.2 280.8h3M1051.2 281.7h3M1070.1 279.0h3M1073.3 277.6h3M1074.9 277.9h3M1076.4 273.2h3M1081.2 273.1h3M1085.9 261.4h3M1092.2 261.6h3M1100.0 258.2h3M1103.2 251.2h3M1118.9 261.0h3M1123.6 252.9h3M1133.1 254.5h3M1134.7 255.6h3M1169.3 237.1h3M1172.4 236.2h3M1185.0 241.5h3M1186.6 233.8h3M1200.8 256.8h3M1218.1 253.1h3M1219.6 252.7h3M1230.7 275.1h3M1240.1 288.0h3M1241.7 287.9h3M1246.4 284.6h3M1254.3 298.6h3M1255.8 296.1h3M1263.7 298.3h3M1268.4 293.4h3M1279.4 293.7h3M1282.6 300.3h3M1292.0 296.5h3M1293.6 296.8h3M1298.3 292.0h3M1306.2 287.0h3M1312.5 294.7h3M1314.1 297.8h3M1328.2 257.1h3M1345.5 257.3h3M1353.4 247.3h3M1366.0 248.1h3M1367.6 246.0h3M1377.0 251.6h3M1383.3 258.7h3M1386.5 261.7h3M1395.9 253.1h3M1399.0 249.9h3M1402.2 235.4h3M1403.8 226.2h3M1405.3 224.2h3M1410.1 203.3h3M1417.9 213.0h3M1422.7 212.9h3M1425.8 206.1h3M1438.4 188.2h3M1440.0 192.7h3M1457.3 162.2h3M1460.4 153.0h3M1465.1 165.1h3M1468.3 161.6h3M1474.6 168.4h3M1479.3 145.0h3M1487.2 138.5h3M1502.9 143.7h3M1520.2 127.3h3M1536.0 124.2h3M1550.1 133.3h3M1551.7 133.5h3M1556.4 139.7h3M1583.2 140.4h3M1609.9 145.0h3M1614.7 146.1h3M1617.8 151.2h3M1625.7 163.2h3M1635.1 182.9h3M1644.6 195.9h3M1654.0 178.6h3M1655.6 178.2h3M1658.7 184.4h3M1666.6 177.8h3M1669.7 183.0h3M1693.3 180.7h3M1715.4 190.8h3M1726.4 178.5h3M1735.8 172.2h3M1748.4 160.7h3M1761.0 165.0h3M1768.9 162.6h3M1781.5 150.1h3M1783.0 149.8h3M1801.9 158.7h3M1817.7 155.2h3M1825.5 151.5h3M1830.3 145.5h3M1833.4 150.4h3M1838.1 149.8h3M1844.4 145.2h3M1847.6 141.3h3M1855.4 148.8h3M1868.0 140.8h3M1869.6 139.7h3M1888.5 149.5h3M1891.6 145.6h3M1894.8 145.5h3" stroke="#f4f08a" stroke-width="2.2" fill="none"/></g></svg><div class="mt" style="left:39.6px;top:368.14px;font-size:14.2px;color:#e0e0e0;transform:scaleY(1.39);font-weight:normal;-webkit-text-stroke:0.35px #e0e0e0;"><i style="width:9.70px">0</i><i style="width:9.70px">5</i></div><div class="mt" style="left:101.3px;top:368.14px;font-size:14.2px;color:#e0e0e0;transform:scaleY(1.39);font-weight:bold;-webkit-text-stroke:0.35px #e0e0e0;"><i style="width:9.70px">0</i><i style="width:9.70px">6</i></div><div class="mt" style="left:143.1px;top:368.14px;font-size:14.2px;color:#e0e0e0;transform:scaleY(1.39);font-weight:normal;-webkit-text-stroke:0.35px #e0e0e0;"><i style="width:9.70px">0</i><i style="width:9.70px">9</i></div><div class="mt" style="left:238.2px;top:368.14px;font-size:14.2px;color:#e0e0e0;transform:scaleY(1.39);font-weight:normal;-webkit-text-stroke:0.35px #e0e0e0;"><i style="width:9.70px">1</i><i style="width:9.70px">0</i></div><div class="mt" style="left:333.7px;top:368.14px;font-size:14.2px;color:#e0e0e0;transform:scaleY(1.39);font-weight:normal;-webkit-text-stroke:0.35px #e0e0e0;"><i style="width:9.70px">1</i><i style="width:9.70px">1</i></div><div class="mt" style="left:428.8px;top:368.14px;font-size:14.2px;color:#e0e0e0;transform:scaleY(1.39);font-weight:normal;-webkit-text-stroke:0.35px #e0e0e0;"><i style="width:9.70px">1</i><i style="width:9.70px">2</i></div><div class="mt" style="left:522.9px;top:368.14px;font-size:14.2px;color:#e0e0e0;transform:scaleY(1.39);font-weight:normal;-webkit-text-stroke:0.35px #e0e0e0;"><i style="width:9.70px">1</i><i style="width:9.70px">3</i></div><div class="mt" style="left:618.0px;top:368.14px;font-size:14.2px;color:#e0e0e0;transform:scaleY(1.39);font-weight:normal;-webkit-text-stroke:0.35px #e0e0e0;"><i style="width:9.70px">1</i><i style="width:9.70px">4</i></div><div class="mt" style="left:711.2px;top:368.14px;font-size:14.2px;color:#e0e0e0;transform:scaleY(1.39);font-weight:normal;-webkit-text-stroke:0.35px #e0e0e0;"><i style="width:9.70px">1</i><i style="width:9.70px">5</i></div><div class="mt" style="left:773.2px;top:368.14px;font-size:14.2px;color:#e0e0e0;transform:scaleY(1.39);font-weight:normal;-webkit-text-stroke:0.35px #e0e0e0;"><i style="width:9.70px">1</i><i style="width:9.70px">7</i></div><div class="mt" style="left:867.3px;top:368.14px;font-size:14.2px;color:#e0e0e0;transform:scaleY(1.39);font-weight:normal;-webkit-text-stroke:0.35px #e0e0e0;"><i style="width:9.70px">1</i><i style="width:9.70px">8</i></div><div class="mt" style="left:957.9px;top:368.14px;font-size:14.2px;color:#e0e0e0;transform:scaleY(1.39);font-weight:normal;-webkit-text-stroke:0.35px #e0e0e0;"><i style="width:9.70px">1</i><i style="width:9.70px">9</i></div><div class="mt" style="left:1045.0px;top:368.14px;font-size:14.2px;color:#e0e0e0;transform:scaleY(1.39);font-weight:normal;-webkit-text-stroke:0.35px #e0e0e0;"><i style="width:9.70px">2</i><i style="width:9.70px">0</i></div><div class="mt" style="left:1129.3px;top:368.14px;font-size:14.2px;color:#e0e0e0;transform:scaleY(1.39);font-weight:normal;-webkit-text-stroke:0.35px #e0e0e0;"><i style="width:9.70px">2</i><i style="width:9.70px">1</i></div><div class="mt" style="left:1196.2px;top:368.14px;font-size:14.2px;color:#e0e0e0;transform:scaleY(1.39);font-weight:normal;-webkit-text-stroke:0.35px #e0e0e0;"><i style="width:9.70px">2</i><i style="width:9.70px">2</i></div><div class="mt" style="left:1283.7px;top:368.14px;font-size:14.2px;color:#e0e0e0;transform:scaleY(1.39);font-weight:normal;-webkit-text-stroke:0.35px #e0e0e0;"><i style="width:9.70px">2</i><i style="width:9.70px">3</i></div><div class="mt" style="left:1364.0px;top:368.14px;font-size:14.2px;color:#e0e0e0;transform:scaleY(1.39);font-weight:normal;-webkit-text-stroke:0.35px #e0e0e0;"><i style="width:9.70px">0</i><i style="width:9.70px">0</i></div><div class="mt" style="left:1452.5px;top:368.14px;font-size:14.2px;color:#e0e0e0;transform:scaleY(1.39);font-weight:normal;-webkit-text-stroke:0.35px #e0e0e0;"><i style="width:9.70px">0</i><i style="width:9.70px">1</i></div><div class="mt" style="left:1548.0px;top:368.14px;font-size:14.2px;color:#e0e0e0;transform:scaleY(1.39);font-weight:normal;-webkit-text-stroke:0.35px #e0e0e0;"><i style="width:9.70px">0</i><i style="width:9.70px">2</i></div><div class="mt" style="left:1641.7px;top:368.14px;font-size:14.2px;color:#e0e0e0;transform:scaleY(1.39);font-weight:normal;-webkit-text-stroke:0.35px #e0e0e0;"><i style="width:9.70px">0</i><i style="width:9.70px">3</i></div><div class="mt" style="left:1737.5px;top:368.14px;font-size:14.2px;color:#e0e0e0;transform:scaleY(1.39);font-weight:normal;-webkit-text-stroke:0.35px #e0e0e0;"><i style="width:9.70px">0</i><i style="width:9.70px">4</i></div><div class="mt" style="left:1820.1px;top:368.14px;font-size:14.2px;color:#e0e0e0;transform:scaleY(1.39);font-weight:normal;-webkit-text-stroke:0.35px #e0e0e0;"><i style="width:9.70px">0</i><i style="width:9.70px">5</i></div><div class="mt" style="left:1874.1px;top:368.14px;font-size:14.2px;color:#e0e0e0;transform:scaleY(1.39);font-weight:normal;-webkit-text-stroke:0.35px #e0e0e0;"><i style="width:9.70px">0</i><i style="width:9.70px">6</i></div><div class="mt" style="left:129.5px;top:343.96px;font-size:13.5px;color:#d0d0d0;transform:scaleY(1.45);font-weight:normal;-webkit-text-stroke:0.3px #d0d0d0;"><i style="width:9.00px">0</i><i style="width:9.00px">9</i></div><div class="mt" style="left:1365px;top:343.96px;font-size:13.5px;color:#d0d0d0;transform:scaleY(1.45);font-weight:normal;-webkit-text-stroke:0.3px #d0d0d0;"><i style="width:9.00px">1</i><i style="width:9.00px">0</i></div><div class="mt" style="left:1907.8px;top:90.85px;font-size:14.2px;color:#d8d8d8;transform:scaleY(1.53);font-weight:normal;-webkit-text-stroke:0.35px #d8d8d8;"><i style="width:9.74px">2</i><i style="width:9.74px">6</i><i style="width:9.74px">,</i><i style="width:9.74px">2</i><i style="width:9.74px">5</i><i style="width:9.74px">0</i></div><div class="mt" style="left:1907.8px;top:203.35px;font-size:14.2px;color:#d8d8d8;transform:scaleY(1.53);font-weight:normal;-webkit-text-stroke:0.35px #d8d8d8;"><i style="width:9.74px">2</i><i style="width:9.74px">6</i><i style="width:9.74px">,</i><i style="width:9.74px">0</i><i style="width:9.74px">0</i><i style="width:9.74px">0</i></div><div class="mt" style="left:1907.8px;top:315.85px;font-size:14.2px;color:#d8d8d8;transform:scaleY(1.53);font-weight:normal;-webkit-text-stroke:0.35px #d8d8d8;"><i style="width:9.74px">2</i><i style="width:9.74px">5</i><i style="width:9.74px">,</i><i style="width:9.74px">7</i><i style="width:9.74px">5</i><i style="width:9.74px">0</i></div><div class="a" style="left:1906.5px;top:110px;width:94.5px;height:31.5px;background:#d4d4d4;border-top:1.2px solid #f0f0f0;border-left:1.2px solid #f0f0f0"></div><div class="mt" style="left:1921.7px;top:114.15px;font-size:14.8px;color:#000;transform:scaleY(1.4);font-weight:bold;-webkit-text-stroke:0.5px #000;"><i style="width:10.10px">2</i><i style="width:10.10px">6</i><i style="width:10.10px">,</i><i style="width:10.10px">2</i><i style="width:10.10px">2</i><i style="width:10.10px">3</i></div><div class="mt" style="left:11px;top:74.95px;font-size:14.2px;color:#d4d4d4;transform:scaleY(1.53);font-weight:normal;-webkit-text-stroke:0.35px #d4d4d4;"><i style="width:19.30px;transform:scale(1.3028,0.8515);transform-origin:50% 72%">時</i><i style="width:19.30px;transform:scale(1.3028,0.8515);transform-origin:50% 72%">刻</i><i style="width:9.65px">:</i><i style="width:9.65px">0</i><i style="width:9.65px">6</i><i style="width:9.65px">:</i><i style="width:9.65px">0</i><i style="width:9.65px">0</i><i style="width:9.65px">&nbsp;</i><i style="width:19.30px;transform:scale(1.3028,0.8515);transform-origin:50% 72%">始</i><i style="width:19.30px;transform:scale(1.3028,0.8515);transform-origin:50% 72%">値</i><i style="width:9.65px">:</i><i style="width:9.65px">2</i><i style="width:9.65px">6</i><i style="width:9.65px">,</i><i style="width:9.65px">2</i><i style="width:9.65px">2</i><i style="width:9.65px">3</i><i style="width:9.65px">&nbsp;</i><i style="width:19.30px;transform:scale(1.3028,0.8515);transform-origin:50% 72%">高</i><i style="width:19.30px;transform:scale(1.3028,0.8515);transform-origin:50% 72%">値</i><i style="width:9.65px">:</i><i style="width:9.65px">2</i><i style="width:9.65px">6</i><i style="width:9.65px">,</i><i style="width:9.65px">2</i><i style="width:9.65px">2</i><i style="width:9.65px">3</i><i style="width:9.65px">&nbsp;</i><i style="width:19.30px;transform:scale(1.3028,0.8515);transform-origin:50% 72%">安</i><i style="width:19.30px;transform:scale(1.3028,0.8515);transform-origin:50% 72%">値</i><i style="width:9.65px">:</i><i style="width:9.65px">2</i><i style="width:9.65px">6</i><i style="width:9.65px">,</i><i style="width:9.65px">2</i><i style="width:9.65px">2</i><i style="width:9.65px">3</i><i style="width:9.65px">&nbsp;</i><i style="width:19.30px;transform:scale(1.3028,0.8515);transform-origin:50% 72%">終</i><i style="width:19.30px;transform:scale(1.3028,0.8515);transform-origin:50% 72%">値</i><i style="width:9.65px">:</i><i style="width:9.65px">2</i><i style="width:9.65px">6</i><i style="width:9.65px">,</i><i style="width:9.65px">2</i><i style="width:9.65px">2</i><i style="width:9.65px">3</i></div><div class="a" style="left:9px;top:392.8px;width:1992px;height:6.5px;background:#f4f4f4"></div><div class="a" style="left:9px;top:399.3px;width:1992px;height:1.4px;background:#a0a0a0"></div><div class="a" style="left:9px;top:401.5px;width:1992px;height:346.79999999999995px;background:#1b1b1b"></div><div class="a" style="left:9.3px;top:401.0px;width:1898.3px;height:323.79999999999995px;background:#f2f2f2"></div><div class="a" style="left:11px;top:402.5px;width:1895px;height:320.79999999999995px;background:#000"></div><svg class="a" style="left:0;top:0" width="2009" height="1080" viewBox="0 0 2009 1080"><defs><clipPath id="c402"><rect x="11" y="402.5" width="1895" height="320.79999999999995"/></clipPath></defs><g clip-path="url(#c402)"><path d="M40 402.5V723.3 M143 402.5V723.3 M237 402.5V723.3 M332 402.5V723.3 M427 402.5V723.3 M522 402.5V723.3 M617 402.5V723.3 M710 402.5V723.3 M772.6 402.5V723.3 M866.7 402.5V723.3 M956.6 402.5V723.3 M1044.4 402.5V723.3 M1129 402.5V723.3 M1196 402.5V723.3 M1283.4 402.5V723.3 M1363.4 402.5V723.3 M1452.6 402.5V723.3 M1548 402.5V723.3 M1641.5 402.5V723.3 M1737.3 402.5V723.3 M1819.9 402.5V723.3 M1899.3 402.5V723.3 M11 443.1H1906 M11 492.7H1906 M11 542.3H1906 M11 591.9H1906 M11 641.5H1906 M11 691.3H1906" stroke="#a4a4a4" stroke-width="1.6" stroke-dasharray="1.6 1.55" fill="none"/><path d="M128 402.5V723.3" stroke="#b4b4b4" stroke-width="3.2" stroke-dasharray="1.6 1.55" fill="none"/><path d="M72.9 568.5V573.0M93.3 578.0V583.4M121.7 548.2V555.1M139.0 421.9V430.3M140.5 416.1V425.4M145.3 429.1V433.5M148.4 433.1V442.3M167.3 482.6V490.8M170.4 474.6V487.0M172.0 465.9V479.8M173.6 466.1V471.2M178.3 466.2V477.0M192.5 473.7V480.9M194.1 476.6V480.7M197.2 475.5V480.4M200.3 467.3V476.4M205.1 478.0V489.8M216.1 500.5V508.2M220.8 501.7V513.6M222.4 501.2V507.9M225.5 489.4V503.4M227.1 489.1V496.4M230.3 472.7V489.4M241.3 549.1V554.5M247.6 559.2V564.4M257.0 569.0V571.1M260.2 575.7V581.1M271.2 585.1V595.0M272.7 584.8V589.4M275.9 591.4V598.4M301.1 671.0V684.1M302.6 666.3V673.6M304.2 656.2V667.2M305.8 647.0V660.6M307.4 637.8V653.1M316.8 628.0V637.1M321.5 644.4V653.7M332.5 676.8V683.1M337.3 684.1V697.1M342.0 666.2V673.4M345.1 672.1V675.8M346.7 659.9V672.1M349.9 653.0V666.3M351.4 648.7V656.5M359.3 644.3V656.8M360.9 642.7V648.7M364.0 635.6V642.7M367.2 628.2V642.1M373.5 625.5V638.0M378.2 608.0V617.3M379.8 594.3V608.9M384.5 585.6V600.5M387.6 587.1V596.1M389.2 580.7V589.7M400.2 590.6V602.5M401.8 588.0V599.3M404.9 577.7V589.3M408.1 575.5V583.2M416.0 570.5V583.8M422.2 567.6V574.4M447.4 547.6V553.5M453.7 544.6V555.2M461.6 549.1V560.1M464.7 549.6V562.3M471.0 552.2V560.3M474.2 544.7V550.5M477.3 549.7V553.2M486.8 555.8V568.6M491.5 555.2V562.5M497.8 553.1V562.2M499.4 550.3V557.4M500.9 552.7V555.6M518.2 559.4V564.0M524.5 562.5V577.0M526.1 562.0V573.0M529.3 564.2V567.3M537.1 557.0V562.2M540.3 552.5V564.2M549.7 554.2V566.9M551.3 556.0V559.4M571.8 561.6V571.1M579.6 563.4V580.2M585.9 543.7V551.7M598.5 521.4V529.2M603.2 524.6V527.2M641.0 549.4V553.2M645.7 544.8V553.7M652.0 552.0V557.0M653.6 548.8V554.6M661.5 547.6V550.1M666.2 552.5V559.5M667.8 552.0V557.8M680.3 554.3V562.9M688.2 551.1V561.0M704.0 535.6V544.2M721.3 554.1V556.7M748.0 566.1V572.7M749.6 568.5V576.6M770.0 546.2V555.0M795.2 576.6V580.1M796.8 565.2V578.4M801.5 557.2V566.9M807.8 541.0V552.5M815.7 523.7V537.0M817.3 517.9V529.0M822.0 518.6V529.4M823.6 507.5V527.4M828.3 523.8V528.2M833.0 521.2V527.4M845.6 514.0V528.1M850.3 513.2V521.2M881.8 537.3V544.9M892.8 553.0V563.3M927.4 618.9V620.6M940.0 621.8V636.0M952.6 636.5V638.8M965.2 659.3V669.6M968.3 649.0V660.9M1045.5 669.6V677.2M1053.3 659.0V665.0M1058.0 662.2V665.7M1083.2 650.3V658.7M1086.4 648.7V662.7M1091.1 651.6V654.2M1108.4 626.2V632.2M1113.1 618.3V630.2M1124.1 620.5V631.2M1133.6 628.3V636.3M1143.0 632.5V638.5M1157.2 655.7V657.2M1163.5 661.3V676.9M1206.0 686.6V693.4M1213.8 649.7V662.5M1262.6 636.3V643.7M1283.1 604.9V615.4M1302.0 607.3V614.7M1313.0 595.2V606.4M1322.4 571.4V587.8M1324.0 561.3V571.4M1331.9 553.2V561.1M1350.8 546.5V552.6M1377.5 580.9V582.5M1387.0 572.5V577.3M1390.1 567.5V573.9M1470.4 529.4V537.6M1475.1 517.9V530.3M1478.2 503.8V521.8M1505.0 500.4V504.9M1539.6 504.2V509.1M1545.9 514.4V516.1M1569.5 511.0V519.5M1832.3 514.0V518.2M1835.5 513.0V519.7M1846.5 511.0V518.9M1868.5 510.2V519.0M1876.4 512.0V515.2M1882.7 511.8V512.4" stroke="#ff0000" stroke-width="2.2" fill="none"/><path d="M36.7 556.5V561.7M142.1 419.6V430.9M143.7 425.7V437.0M151.6 429.4V444.0M153.1 440.5V461.1M154.7 455.9V466.4M156.3 458.6V462.6M157.9 456.5V473.2M159.4 471.5V475.2M162.6 476.8V490.8M165.7 483.5V488.1M168.9 481.7V487.0M175.2 465.2V473.7M176.7 464.9V476.1M179.9 464.4V470.8M181.5 468.2V476.0M186.2 463.8V477.4M187.8 470.4V474.0M189.3 473.1V478.2M190.9 478.2V480.9M195.6 478.4V479.5M198.8 472.0V478.1M201.9 472.6V479.9M203.5 479.9V488.0M206.6 481.5V493.2M209.8 487.0V491.8M211.4 486.5V498.9M212.9 493.7V500.5M214.5 497.9V508.2M217.7 499.6V512.6M219.2 511.7V517.9M231.8 478.0V481.7M235.0 477.9V492.5M236.5 490.7V498.7M238.1 490.8V499.5M244.4 552.9V559.8M250.7 559.4V568.2M253.9 568.2V571.6M255.4 567.2V576.4M258.6 569.0V581.1M264.9 569.1V582.9M268.0 583.6V593.2M269.6 589.7V592.4M285.3 588.2V593.4M294.8 622.6V639.0M296.3 634.6V655.4M297.9 653.6V678.3M299.5 673.9V678.9M310.5 636.8V645.1M318.4 633.2V638.9M323.1 646.2V655.8M326.2 651.2V667.0M327.8 658.3V670.6M348.3 657.3V667.2M356.2 643.9V649.2M357.7 644.8V651.6M368.7 631.7V638.3M371.9 634.3V637.2M382.9 589.3V597.9M386.1 588.2V596.1M393.9 584.3V586.8M397.1 584.4V592.1M398.6 586.9V597.2M406.5 575.1V582.3M414.4 579.5V582.0M419.1 567.0V570.7M427.0 562.5V568.4M441.1 553.0V558.3M445.9 550.7V557.0M449.0 547.6V553.2M469.5 550.3V562.0M482.1 553.2V566.4M521.4 562.0V576.2M523.0 570.1V578.8M534.0 553.6V561.0M538.7 552.7V561.6M546.6 553.3V559.0M548.1 552.0V561.7M552.9 553.4V566.3M559.2 552.5V561.3M565.5 563.8V571.0M576.5 570.8V581.8M581.2 563.4V572.6M617.4 533.9V537.8M620.5 534.6V540.4M622.1 540.4V546.3M630.0 541.9V554.8M634.7 539.1V554.0M650.4 548.5V560.5M664.6 545.2V557.7M670.9 556.0V563.6M672.5 558.3V563.6M686.6 550.3V556.6M696.1 546.9V553.0M707.1 540.9V545.1M710.2 539.0V548.2M711.8 540.3V547.1M715.0 544.5V556.4M719.7 551.3V555.8M735.4 551.1V558.2M787.4 569.4V574.2M825.1 507.5V523.0M826.7 522.1V529.1M834.6 522.1V531.4M844.0 519.0V526.4M847.2 514.0V515.9M848.7 511.6V521.2M883.4 539.9V549.7M884.9 544.5V551.0M891.2 547.9V565.1M895.9 564.3V574.8M899.1 571.7V577.6M905.4 576.5V585.6M907.0 579.5V584.6M914.8 582.1V593.1M922.7 593.9V603.6M925.8 603.8V622.3M929.0 613.7V638.6M947.9 630.3V634.2M957.3 643.6V650.6M962.0 657.6V668.3M974.6 644.4V648.0M1006.1 677.2V690.2M1009.3 688.6V698.5M1040.7 649.1V657.1M1048.6 668.4V680.3M1076.9 657.2V663.2M1160.3 660.1V671.2M1161.9 662.4V675.1M1179.2 663.6V672.8M1182.4 661.0V684.0M1187.1 681.2V688.5M1215.4 653.2V655.5M1223.3 640.3V655.7M1232.7 637.8V641.0M1235.9 640.7V645.9M1284.7 602.3V616.1M1294.1 609.9V620.0M1298.8 605.3V612.0M1369.6 563.8V573.5M1393.3 567.3V571.8M1531.7 504.1V513.5M1547.5 514.4V521.8M1638.8 540.4V546.6M1687.5 543.5V551.7" stroke="#0a84ff" stroke-width="2.2" fill="none"/><path d="M26.7 570.1h3M48.8 560.2h3M122.7 549.4h3M149.5 434.6h3M160.5 479.4h3M182.5 472.0h3M223.5 500.8h3M228.2 484.1h3M232.9 481.4h3M251.8 568.2h3M278.5 592.9h3M286.4 593.2h3M291.1 611.6h3M311.6 639.1h3M324.2 651.2h3M339.9 672.5h3M343.1 674.9h3M369.8 635.2h3M374.5 622.5h3M376.1 617.3h3M395.0 584.4h3M409.2 580.7h3M420.2 571.8h3M423.3 569.9h3M424.9 567.8h3M432.8 569.2h3M437.5 561.1h3M450.1 554.5h3M454.8 552.4h3M459.5 558.3h3M465.8 551.7h3M467.4 552.9h3M475.3 550.6h3M483.1 557.5h3M505.2 549.3h3M514.6 562.1h3M519.3 567.3h3M527.2 566.5h3M535.1 560.5h3M542.9 553.5h3M544.5 553.3h3M553.9 564.3h3M563.4 567.3h3M566.5 576.0h3M572.8 571.8h3M582.3 561.0h3M590.1 529.7h3M593.3 533.2h3M594.9 530.6h3M607.5 532.3h3M609.0 536.8h3M613.7 538.9h3M615.3 534.8h3M618.5 539.9h3M632.6 544.3h3M637.4 551.0h3M638.9 553.2h3M662.5 547.0h3M673.5 566.6h3M675.1 562.2h3M690.9 554.8h3M694.0 550.4h3M700.3 542.1h3M712.9 546.3h3M717.6 551.3h3M728.6 561.4h3M731.8 555.0h3M745.9 572.7h3M750.7 565.3h3M752.2 564.4h3M755.4 559.7h3M760.1 554.1h3M764.8 548.5h3M775.8 565.1h3M779.0 573.2h3M783.7 570.5h3M785.3 570.3h3M788.4 574.4h3M790.0 573.0h3M799.4 565.1h3M812.0 532.1h3M830.9 527.4h3M854.5 506.9h3M856.1 512.2h3M859.3 514.8h3M864.0 521.7h3M867.1 528.3h3M873.4 532.9h3M878.1 545.2h3M889.2 547.9h3M893.9 565.2h3M915.9 598.4h3M917.5 598.3h3M919.1 599.8h3M923.8 605.5h3M934.8 628.3h3M950.5 637.0h3M953.7 640.0h3M969.4 646.1h3M972.6 644.4h3M975.7 644.4h3M994.6 685.4h3M996.2 688.7h3M1002.5 679.7h3M1021.3 695.0h3M1022.9 693.8h3M1024.5 692.5h3M1033.9 662.2h3M1038.7 650.8h3M1059.1 659.7h3M1070.1 661.7h3M1073.3 662.8h3M1087.4 655.7h3M1092.2 651.9h3M1095.3 646.2h3M1096.9 649.8h3M1098.5 644.7h3M1100.0 644.4h3M1103.2 635.7h3M1106.3 632.2h3M1125.2 623.5h3M1129.9 626.6h3M1139.4 638.9h3M1145.7 642.6h3M1147.2 638.4h3M1150.4 650.0h3M1169.3 662.7h3M1191.3 694.7h3M1196.0 693.8h3M1211.8 660.7h3M1225.9 646.4h3M1237.0 646.4h3M1240.1 642.0h3M1243.2 644.9h3M1244.8 647.1h3M1249.5 637.9h3M1274.7 604.6h3M1281.0 610.1h3M1285.7 605.9h3M1292.0 612.5h3M1303.0 609.5h3M1304.6 611.5h3M1306.2 611.4h3M1318.8 591.3h3M1353.4 553.4h3M1366.0 565.9h3M1372.3 567.1h3M1375.4 582.5h3M1380.2 582.8h3M1388.0 571.3h3M1391.2 567.3h3M1399.0 568.8h3M1432.1 555.6h3M1433.7 554.0h3M1436.8 561.7h3M1441.5 548.2h3M1446.3 560.2h3M1451.0 548.6h3M1452.6 543.8h3M1457.3 529.0h3M1460.4 524.1h3M1462.0 529.5h3M1463.6 530.0h3M1466.7 533.7h3M1471.4 525.7h3M1476.2 518.3h3M1479.3 505.5h3M1480.9 503.2h3M1548.6 518.2h3M1553.3 524.5h3M1556.4 522.3h3M1558.0 523.6h3M1564.3 518.1h3M1567.4 519.5h3M1570.6 516.1h3M1572.2 512.6h3M1575.3 515.6h3M1576.9 512.2h3M1584.8 506.1h3M1586.3 513.8h3M1587.9 519.6h3M1594.2 523.4h3M1627.2 536.6h3M1632.0 542.0h3M1658.7 538.5h3M1682.3 556.7h3M1688.6 545.2h3M1690.2 549.5h3M1702.8 544.8h3M1726.4 546.0h3M1745.3 545.4h3M1784.6 536.9h3M1789.3 539.3h3M1801.9 536.3h3M1809.8 529.6h3M1814.5 532.1h3M1824.0 528.7h3M1830.3 518.2h3M1833.4 517.1h3M1836.5 517.2h3M1841.3 517.5h3M1849.1 520.7h3M1853.9 515.4h3M1872.7 502.2h3M1879.0 511.8h3M1883.8 510.8h3M1891.6 503.8h3" stroke="#f4f08a" stroke-width="2.2" fill="none"/></g></svg><div class="mt" style="left:39.6px;top:723.64px;font-size:14.2px;color:#e0e0e0;transform:scaleY(1.39);font-weight:normal;-webkit-text-stroke:0.35px #e0e0e0;"><i style="width:9.70px">0</i><i style="width:9.70px">5</i></div><div class="mt" style="left:101.3px;top:723.64px;font-size:14.2px;color:#e0e0e0;transform:scaleY(1.39);font-weight:bold;-webkit-text-stroke:0.35px #e0e0e0;"><i style="width:9.70px">0</i><i style="width:9.70px">6</i></div><div class="mt" style="left:143.1px;top:723.64px;font-size:14.2px;color:#e0e0e0;transform:scaleY(1.39);font-weight:normal;-webkit-text-stroke:0.35px #e0e0e0;"><i style="width:9.70px">0</i><i style="width:9.70px">9</i></div><div class="mt" style="left:238.2px;top:723.64px;font-size:14.2px;color:#e0e0e0;transform:scaleY(1.39);font-weight:normal;-webkit-text-stroke:0.35px #e0e0e0;"><i style="width:9.70px">1</i><i style="width:9.70px">0</i></div><div class="mt" style="left:333.7px;top:723.64px;font-size:14.2px;color:#e0e0e0;transform:scaleY(1.39);font-weight:normal;-webkit-text-stroke:0.35px #e0e0e0;"><i style="width:9.70px">1</i><i style="width:9.70px">1</i></div><div class="mt" style="left:428.8px;top:723.64px;font-size:14.2px;color:#e0e0e0;transform:scaleY(1.39);font-weight:normal;-webkit-text-stroke:0.35px #e0e0e0;"><i style="width:9.70px">1</i><i style="width:9.70px">2</i></div><div class="mt" style="left:522.9px;top:723.64px;font-size:14.2px;color:#e0e0e0;transform:scaleY(1.39);font-weight:normal;-webkit-text-stroke:0.35px #e0e0e0;"><i style="width:9.70px">1</i><i style="width:9.70px">3</i></div><div class="mt" style="left:618.0px;top:723.64px;font-size:14.2px;color:#e0e0e0;transform:scaleY(1.39);font-weight:normal;-webkit-text-stroke:0.35px #e0e0e0;"><i style="width:9.70px">1</i><i style="width:9.70px">4</i></div><div class="mt" style="left:711.2px;top:723.64px;font-size:14.2px;color:#e0e0e0;transform:scaleY(1.39);font-weight:normal;-webkit-text-stroke:0.35px #e0e0e0;"><i style="width:9.70px">1</i><i style="width:9.70px">5</i></div><div class="mt" style="left:773.2px;top:723.64px;font-size:14.2px;color:#e0e0e0;transform:scaleY(1.39);font-weight:normal;-webkit-text-stroke:0.35px #e0e0e0;"><i style="width:9.70px">1</i><i style="width:9.70px">7</i></div><div class="mt" style="left:867.3px;top:723.64px;font-size:14.2px;color:#e0e0e0;transform:scaleY(1.39);font-weight:normal;-webkit-text-stroke:0.35px #e0e0e0;"><i style="width:9.70px">1</i><i style="width:9.70px">8</i></div><div class="mt" style="left:957.9px;top:723.64px;font-size:14.2px;color:#e0e0e0;transform:scaleY(1.39);font-weight:normal;-webkit-text-stroke:0.35px #e0e0e0;"><i style="width:9.70px">1</i><i style="width:9.70px">9</i></div><div class="mt" style="left:1045.0px;top:723.64px;font-size:14.2px;color:#e0e0e0;transform:scaleY(1.39);font-weight:normal;-webkit-text-stroke:0.35px #e0e0e0;"><i style="width:9.70px">2</i><i style="width:9.70px">0</i></div><div class="mt" style="left:1129.3px;top:723.64px;font-size:14.2px;color:#e0e0e0;transform:scaleY(1.39);font-weight:normal;-webkit-text-stroke:0.35px #e0e0e0;"><i style="width:9.70px">2</i><i style="width:9.70px">1</i></div><div class="mt" style="left:1196.2px;top:723.64px;font-size:14.2px;color:#e0e0e0;transform:scaleY(1.39);font-weight:normal;-webkit-text-stroke:0.35px #e0e0e0;"><i style="width:9.70px">2</i><i style="width:9.70px">2</i></div><div class="mt" style="left:1283.7px;top:723.64px;font-size:14.2px;color:#e0e0e0;transform:scaleY(1.39);font-weight:normal;-webkit-text-stroke:0.35px #e0e0e0;"><i style="width:9.70px">2</i><i style="width:9.70px">3</i></div><div class="mt" style="left:1364.0px;top:723.64px;font-size:14.2px;color:#e0e0e0;transform:scaleY(1.39);font-weight:normal;-webkit-text-stroke:0.35px #e0e0e0;"><i style="width:9.70px">0</i><i style="width:9.70px">0</i></div><div class="mt" style="left:1452.5px;top:723.64px;font-size:14.2px;color:#e0e0e0;transform:scaleY(1.39);font-weight:normal;-webkit-text-stroke:0.35px #e0e0e0;"><i style="width:9.70px">0</i><i style="width:9.70px">1</i></div><div class="mt" style="left:1548.0px;top:723.64px;font-size:14.2px;color:#e0e0e0;transform:scaleY(1.39);font-weight:normal;-webkit-text-stroke:0.35px #e0e0e0;"><i style="width:9.70px">0</i><i style="width:9.70px">2</i></div><div class="mt" style="left:1641.7px;top:723.64px;font-size:14.2px;color:#e0e0e0;transform:scaleY(1.39);font-weight:normal;-webkit-text-stroke:0.35px #e0e0e0;"><i style="width:9.70px">0</i><i style="width:9.70px">3</i></div><div class="mt" style="left:1737.5px;top:723.64px;font-size:14.2px;color:#e0e0e0;transform:scaleY(1.39);font-weight:normal;-webkit-text-stroke:0.35px #e0e0e0;"><i style="width:9.70px">0</i><i style="width:9.70px">4</i></div><div class="mt" style="left:1820.1px;top:723.64px;font-size:14.2px;color:#e0e0e0;transform:scaleY(1.39);font-weight:normal;-webkit-text-stroke:0.35px #e0e0e0;"><i style="width:9.70px">0</i><i style="width:9.70px">5</i></div><div class="mt" style="left:1874.1px;top:723.64px;font-size:14.2px;color:#e0e0e0;transform:scaleY(1.39);font-weight:normal;-webkit-text-stroke:0.35px #e0e0e0;"><i style="width:9.70px">0</i><i style="width:9.70px">6</i></div><div class="mt" style="left:129.5px;top:698.96px;font-size:13.5px;color:#d0d0d0;transform:scaleY(1.45);font-weight:normal;-webkit-text-stroke:0.3px #d0d0d0;"><i style="width:9.00px">0</i><i style="width:9.00px">9</i></div><div class="mt" style="left:1365px;top:698.96px;font-size:13.5px;color:#d0d0d0;transform:scaleY(1.45);font-weight:normal;-webkit-text-stroke:0.3px #d0d0d0;"><i style="width:9.00px">1</i><i style="width:9.00px">0</i></div><div class="mt" style="left:1907.8px;top:422.35px;font-size:14.2px;color:#d8d8d8;transform:scaleY(1.53);font-weight:normal;-webkit-text-stroke:0.35px #d8d8d8;"><i style="width:9.74px">1</i><i style="width:9.74px">0</i><i style="width:9.74px">,</i><i style="width:9.74px">4</i><i style="width:9.74px">0</i><i style="width:9.74px">0</i></div><div class="mt" style="left:1907.8px;top:471.85px;font-size:14.2px;color:#d8d8d8;transform:scaleY(1.53);font-weight:normal;-webkit-text-stroke:0.35px #d8d8d8;"><i style="width:9.74px">1</i><i style="width:9.74px">0</i><i style="width:9.74px">,</i><i style="width:9.74px">3</i><i style="width:9.74px">0</i><i style="width:9.74px">0</i></div><div class="mt" style="left:1907.8px;top:521.85px;font-size:14.2px;color:#d8d8d8;transform:scaleY(1.53);font-weight:normal;-webkit-text-stroke:0.35px #d8d8d8;"><i style="width:9.74px">1</i><i style="width:9.74px">0</i><i style="width:9.74px">,</i><i style="width:9.74px">2</i><i style="width:9.74px">0</i><i style="width:9.74px">0</i></div><div class="mt" style="left:1907.8px;top:571.35px;font-size:14.2px;color:#d8d8d8;transform:scaleY(1.53);font-weight:normal;-webkit-text-stroke:0.35px #d8d8d8;"><i style="width:9.74px">1</i><i style="width:9.74px">0</i><i style="width:9.74px">,</i><i style="width:9.74px">1</i><i style="width:9.74px">0</i><i style="width:9.74px">0</i></div><div class="mt" style="left:1907.8px;top:620.85px;font-size:14.2px;color:#d8d8d8;transform:scaleY(1.53);font-weight:normal;-webkit-text-stroke:0.35px #d8d8d8;"><i style="width:9.74px">1</i><i style="width:9.74px">0</i><i style="width:9.74px">,</i><i style="width:9.74px">0</i><i style="width:9.74px">0</i><i style="width:9.74px">0</i></div><div class="mt" style="left:1907.8px;top:670.85px;font-size:14.2px;color:#d8d8d8;transform:scaleY(1.53);font-weight:normal;-webkit-text-stroke:0.35px #d8d8d8;"><i style="width:9.74px">9</i><i style="width:9.74px">,</i><i style="width:9.74px">9</i><i style="width:9.74px">0</i><i style="width:9.74px">0</i></div><div class="mt" style="left:1907.8px;top:720.35px;font-size:14.2px;color:#d8d8d8;transform:scaleY(1.53);font-weight:normal;-webkit-text-stroke:0.35px #d8d8d8;"><i style="width:9.74px">9</i><i style="width:9.74px">,</i><i style="width:9.74px">8</i><i style="width:9.74px">0</i><i style="width:9.74px">0</i></div><div class="a" style="left:1906.5px;top:492.5px;width:94.5px;height:34.0px;background:#d4d4d4;border-top:1.2px solid #f0f0f0;border-left:1.2px solid #f0f0f0"></div><div class="mt" style="left:1921.7px;top:497.90px;font-size:14.8px;color:#000;transform:scaleY(1.4);font-weight:bold;-webkit-text-stroke:0.5px #000;"><i style="width:10.10px">1</i><i style="width:10.10px">0</i><i style="width:10.10px">,</i><i style="width:10.10px">2</i><i style="width:10.10px">6</i><i style="width:10.10px">9</i></div><div class="mt" style="left:11px;top:402.95px;font-size:14.2px;color:#d4d4d4;transform:scaleY(1.53);font-weight:normal;-webkit-text-stroke:0.35px #d4d4d4;"><i style="width:19.30px;transform:scale(1.3028,0.8515);transform-origin:50% 72%">時</i><i style="width:19.30px;transform:scale(1.3028,0.8515);transform-origin:50% 72%">刻</i><i style="width:9.65px">:</i><i style="width:9.65px">0</i><i style="width:9.65px">6</i><i style="width:9.65px">:</i><i style="width:9.65px">0</i><i style="width:9.65px">0</i><i style="width:9.65px">&nbsp;</i><i style="width:19.30px;transform:scale(1.3028,0.8515);transform-origin:50% 72%">始</i><i style="width:19.30px;transform:scale(1.3028,0.8515);transform-origin:50% 72%">値</i><i style="width:9.65px">:</i><i style="width:9.65px">1</i><i style="width:9.65px">0</i><i style="width:9.65px">,</i><i style="width:9.65px">2</i><i style="width:9.65px">6</i><i style="width:9.65px">9</i><i style="width:9.65px">&nbsp;</i><i style="width:19.30px;transform:scale(1.3028,0.8515);transform-origin:50% 72%">高</i><i style="width:19.30px;transform:scale(1.3028,0.8515);transform-origin:50% 72%">値</i><i style="width:9.65px">:</i><i style="width:9.65px">1</i><i style="width:9.65px">0</i><i style="width:9.65px">,</i><i style="width:9.65px">2</i><i style="width:9.65px">6</i><i style="width:9.65px">9</i><i style="width:9.65px">&nbsp;</i><i style="width:19.30px;transform:scale(1.3028,0.8515);transform-origin:50% 72%">安</i><i style="width:19.30px;transform:scale(1.3028,0.8515);transform-origin:50% 72%">値</i><i style="width:9.65px">:</i><i style="width:9.65px">1</i><i style="width:9.65px">0</i><i style="width:9.65px">,</i><i style="width:9.65px">2</i><i style="width:9.65px">6</i><i style="width:9.65px">9</i><i style="width:9.65px">&nbsp;</i><i style="width:19.30px;transform:scale(1.3028,0.8515);transform-origin:50% 72%">終</i><i style="width:19.30px;transform:scale(1.3028,0.8515);transform-origin:50% 72%">値</i><i style="width:9.65px">:</i><i style="width:9.65px">1</i><i style="width:9.65px">0</i><i style="width:9.65px">,</i><i style="width:9.65px">2</i><i style="width:9.65px">6</i><i style="width:9.65px">9</i></div><div class="a" style="left:9px;top:748.3px;width:1992px;height:6px;background:#f4f4f4"></div><div class="a" style="left:9px;top:754.3px;width:1992px;height:1.4px;background:#a0a0a0"></div><div class="a" style="left:9px;top:757px;width:1992px;height:313.29999999999995px;background:#1b1b1b"></div><div class="a" style="left:9.3px;top:756.5px;width:1898.3px;height:291px;background:#f2f2f2"></div><div class="a" style="left:11px;top:758px;width:1895px;height:288px;background:#000"></div><svg class="a" style="left:0;top:0" width="2009" height="1080" viewBox="0 0 2009 1080"><defs><clipPath id="c758"><rect x="11" y="758" width="1895" height="288"/></clipPath></defs><g clip-path="url(#c758)"><path d="M40 758V1046 M143 758V1046 M237 758V1046 M332 758V1046 M427 758V1046 M522 758V1046 M617 758V1046 M710 758V1046 M772.6 758V1046 M866.7 758V1046 M956.6 758V1046 M1044.4 758V1046 M1129 758V1046 M1196 758V1046 M1283.4 758V1046 M1363.4 758V1046 M1452.6 758V1046 M1548 758V1046 M1641.5 758V1046 M1737.3 758V1046 M1819.9 758V1046 M1899.3 758V1046 M11 783.6H1906 M11 832.6H1906 M11 881.5H1906 M11 930.4H1906 M11 979.4H1906 M11 1028.9H1906" stroke="#a4a4a4" stroke-width="1.6" stroke-dasharray="1.6 1.55" fill="none"/><path d="M128 758V1046" stroke="#b4b4b4" stroke-width="3.2" stroke-dasharray="1.6 1.55" fill="none"/><polyline points="13.1,986.8 14.6,986.8 14.6,989.0 16.2,989.0 16.2,990.5 17.8,990.5 17.8,991.5 19.4,991.5 19.4,991.2 20.9,991.2 20.9,991.8 22.5,991.8 22.5,987.5 24.1,987.5 24.1,986.8 25.7,986.8 25.7,985.7 27.2,985.7 27.2,983.2 28.8,983.2 28.8,985.5 30.4,985.5 30.4,986.3 32.0,986.3 32.0,991.8 33.5,991.8 33.5,990.1 35.1,990.1 35.1,991.2 36.7,991.2 36.7,991.0 38.3,991.0 38.3,993.1 39.8,993.1 39.8,994.0 41.4,994.0 41.4,997.1 43.0,997.1 43.0,1000.1 44.5,1000.1 44.5,1000.9 46.1,1000.9 46.1,1004.6 47.7,1004.6 47.7,1004.9 49.3,1004.9 49.3,1007.0 50.8,1007.0 50.8,1009.3 52.4,1009.3 52.4,1009.5 54.0,1009.5 54.0,1012.8 55.6,1012.8 55.6,1014.1 57.1,1014.1 57.1,1017.8 58.7,1017.8 58.7,1018.5 60.3,1018.5 60.3,1020.2 61.9,1020.2 61.9,1021.5 63.4,1021.5 63.4,1025.3 65.0,1025.3 65.0,1022.6 66.6,1022.6 66.6,1022.2 68.2,1022.2 68.2,1018.3 69.7,1018.3 69.7,1017.8 71.3,1017.8 71.3,1010.3 72.9,1010.3 72.9,1012.4 74.5,1012.4 74.5,1011.4 76.0,1011.4 76.0,1012.0 77.6,1012.0 77.6,1011.4 79.2,1011.4 79.2,1014.6 80.7,1014.6 80.7,1014.4 82.3,1014.4 82.3,1010.2 83.9,1010.2 83.9,1013.9 85.5,1013.9 85.5,1015.4 87.0,1015.4 87.0,1017.2 88.6,1017.2 88.6,1020.2 90.2,1020.2 90.2,1024.7 91.8,1024.7 91.8,1021.0 93.3,1021.0 93.3,1016.7 94.9,1016.7 94.9,1012.3 96.5,1012.3 96.5,1009.8 98.1,1009.8 98.1,1007.2 99.6,1007.2 99.6,1010.1 101.2,1010.1 101.2,1009.3 102.8,1009.3 102.8,1007.8 104.4,1007.8 104.4,1004.2 105.9,1004.2 105.9,1004.7 107.5,1004.7 107.5,1009.5 109.1,1009.5 109.1,1015.0 110.6,1015.0 110.6,1019.0 112.2,1019.0 112.2,1022.2 113.8,1022.2 113.8,1025.5 115.4,1025.5 115.4,1027.4 116.9,1027.4 116.9,1029.5 118.5,1029.5 118.5,1031.2 120.1,1031.2 120.1,1027.3 121.7,1027.3 121.7,1024.9 123.2,1024.9 123.2,1024.2 124.8,1024.2 124.8,1021.8 126.4,1021.8 126.4,1020.4 128.0,1020.4 128.0,1022.3 129.5,1022.3 129.5,998.6 131.1,998.6 131.1,778.9 132.7,778.9 132.7,768.6 134.3,768.6 134.3,778.3 135.8,778.3 135.8,777.8 137.4,777.8 137.4,778.4 139.0,778.4 139.0,777.2 140.5,777.2 140.5,837.5 142.1,837.5 142.1,904.2 143.7,904.2 143.7,954.6 145.3,954.6 145.3,955.7 146.8,955.7 146.8,969.0 148.4,969.0 148.4,972.8 150.0,972.8 150.0,978.8 151.6,978.8 151.6,962.6 153.1,962.6 153.1,951.5 154.7,951.5 154.7,931.4 156.3,931.4 156.3,932.3 157.9,932.3 157.9,932.1 159.4,932.1 159.4,924.8 161.0,924.8 161.0,936.5 162.6,936.5 162.6,933.9 164.2,933.9 164.2,937.4 165.7,937.4 165.7,928.2 167.3,928.2 167.3,921.6 168.9,921.6 168.9,924.9 170.4,924.9 170.4,915.6 172.0,915.6 172.0,933.3 173.6,933.3 173.6,925.4 175.2,925.4 175.2,923.3 176.7,923.3 176.7,930.8 178.3,930.8 178.3,932.7 179.9,932.7 179.9,929.9 181.5,929.9 181.5,937.5 183.0,937.5 183.0,940.0 184.6,940.0 184.6,933.2 186.2,933.2 186.2,943.0 187.8,943.0 187.8,937.4 189.3,937.4 189.3,939.3 190.9,939.3 190.9,942.2 192.5,942.2 192.5,945.5 194.1,945.5 194.1,935.5 195.6,935.5 195.6,942.5 197.2,942.5 197.2,941.3 198.8,941.3 198.8,941.9 200.3,941.9 200.3,948.7 201.9,948.7 201.9,947.0 203.5,947.0 203.5,956.7 205.1,956.7 205.1,963.2 206.6,963.2 206.6,965.5 208.2,965.5 208.2,960.7 209.8,960.7 209.8,956.0 211.4,956.0 211.4,950.6 212.9,950.6 212.9,952.9 214.5,952.9 214.5,948.5 216.1,948.5 216.1,951.2 217.7,951.2 217.7,937.7 219.2,937.7 219.2,951.1 220.8,951.1 220.8,964.8 222.4,964.8 222.4,970.0 224.0,970.0 224.0,962.3 225.5,962.3 225.5,965.5 227.1,965.5 227.1,959.6 228.7,959.6 228.7,961.0 230.3,961.0 230.3,956.7 231.8,956.7 231.8,945.7 233.4,945.7 233.4,952.0 235.0,952.0 235.0,956.4 236.5,956.4 236.5,965.5 238.1,965.5 238.1,961.4 239.7,961.4 239.7,897.5 241.3,897.5 241.3,844.4 242.8,844.4 242.8,862.2 244.4,862.2 244.4,866.5 246.0,866.5 246.0,877.1 247.6,877.1 247.6,888.5 249.1,888.5 249.1,903.7 250.7,903.7 250.7,907.3 252.3,907.3 252.3,911.9 253.9,911.9 253.9,915.1 255.4,915.1 255.4,917.0 257.0,917.0 257.0,919.7 258.6,919.7 258.6,919.1 260.2,919.1 260.2,902.7 261.7,902.7 261.7,891.5 263.3,891.5 263.3,879.4 264.9,879.4 264.9,873.8 266.4,873.8 266.4,870.7 268.0,870.7 268.0,885.7 269.6,885.7 269.6,896.4 271.2,896.4 271.2,910.2 272.7,910.2 272.7,897.7 274.3,897.7 274.3,875.0 275.9,875.0 275.9,866.7 277.5,866.7 277.5,872.7 279.0,872.7 279.0,880.2 280.6,880.2 280.6,859.0 282.2,859.0 282.2,879.0 283.8,879.0 283.8,889.4 285.3,889.4 285.3,899.1 286.9,899.1 286.9,899.9 288.5,899.9 288.5,907.2 290.1,907.2 290.1,914.9 291.6,914.9 291.6,921.8 293.2,921.8 293.2,924.4 294.8,924.4 294.8,918.1 296.3,918.1 296.3,910.4 297.9,910.4 297.9,905.1 299.5,905.1 299.5,897.8 301.1,897.8 301.1,892.7 302.6,892.7 302.6,883.5 304.2,883.5 304.2,878.9 305.8,878.9 305.8,878.2 307.4,878.2 307.4,882.6 308.9,882.6 308.9,874.6 310.5,874.6 310.5,877.8 312.1,877.8 312.1,881.7 313.7,881.7 313.7,883.5 315.2,883.5 315.2,885.9 316.8,885.9 316.8,890.1 318.4,890.1 318.4,893.1 320.0,893.1 320.0,892.1 321.5,892.1 321.5,886.0 323.1,886.0 323.1,887.5 324.7,887.5 324.7,882.7 326.2,882.7 326.2,880.1 327.8,880.1 327.8,879.6 329.4,879.6 329.4,874.0 331.0,874.0 331.0,879.5 332.5,879.5 332.5,885.8 334.1,885.8 334.1,890.3 335.7,890.3 335.7,891.5 337.3,891.5 337.3,882.8 338.8,882.8 338.8,902.5 340.4,902.5 340.4,907.0 342.0,907.0 342.0,897.1 343.6,897.1 343.6,892.7 345.1,892.7 345.1,887.2 346.7,887.2 346.7,881.4 348.3,881.4 348.3,878.4 349.9,878.4 349.9,871.4 351.4,871.4 351.4,877.1 353.0,877.1 353.0,870.5 354.6,870.5 354.6,869.6 356.2,869.6 356.2,875.7 357.7,875.7 357.7,875.9 359.3,875.9 359.3,873.0 360.9,873.0 360.9,872.3 362.4,872.3 362.4,877.0 364.0,877.0 364.0,877.6 365.6,877.6 365.6,880.2 367.2,880.2 367.2,874.6 368.7,874.6 368.7,882.1 370.3,882.1 370.3,892.2 371.9,892.2 371.9,895.0 373.5,895.0 373.5,899.5 375.0,899.5 375.0,909.2 376.6,909.2 376.6,895.3 378.2,895.3 378.2,902.7 379.8,902.7 379.8,907.0 381.3,907.0 381.3,904.5 382.9,904.5 382.9,906.5 384.5,906.5 384.5,910.1 386.1,910.1 386.1,911.0 387.6,911.0 387.6,906.5 389.2,906.5 389.2,908.6 390.8,908.6 390.8,897.3 392.3,897.3 392.3,920.1 393.9,920.1 393.9,915.2 395.5,915.2 395.5,918.7 397.1,918.7 397.1,908.9 398.6,908.9 398.6,925.5 400.2,925.5 400.2,929.2 401.8,929.2 401.8,923.0 403.4,923.0 403.4,935.2 404.9,935.2 404.9,928.5 406.5,928.5 406.5,925.4 408.1,925.4 408.1,918.9 409.7,918.9 409.7,907.3 411.2,907.3 411.2,885.8 412.8,885.8 412.8,887.5 414.4,887.5 414.4,897.9 416.0,897.9 416.0,901.7 417.5,901.7 417.5,922.5 419.1,922.5 419.1,921.7 420.7,921.7 420.7,915.6 422.2,915.6 422.2,918.1 423.8,918.1 423.8,923.7 425.4,923.7 425.4,924.2 427.0,924.2 427.0,922.9 428.5,922.9 428.5,911.6 430.1,911.6 430.1,902.4 431.7,902.4 431.7,891.2 433.3,891.2 433.3,888.8 434.8,888.8 434.8,882.1 436.4,882.1 436.4,879.0 438.0,879.0 438.0,878.0 439.6,878.0 439.6,885.3 441.1,885.3 441.1,892.1 442.7,892.1 442.7,897.1 444.3,897.1 444.3,893.4 445.9,893.4 445.9,901.2 447.4,901.2 447.4,899.3 449.0,899.3 449.0,894.9 450.6,894.9 450.6,897.4 452.1,897.4 452.1,897.8 453.7,897.8 453.7,893.5 455.3,893.5 455.3,880.3 456.9,880.3 456.9,896.7 458.4,896.7 458.4,895.6 460.0,895.6 460.0,897.4 461.6,897.4 461.6,900.7 463.2,900.7 463.2,904.0 464.7,904.0 464.7,901.5 466.3,901.5 466.3,892.1 467.9,892.1 467.9,887.6 469.5,887.6 469.5,868.5 471.0,868.5 471.0,874.8 472.6,874.8 472.6,886.0 474.2,886.0 474.2,875.1 475.8,875.1 475.8,870.1 477.3,870.1 477.3,869.2 478.9,869.2 478.9,874.4 480.5,874.4 480.5,887.9 482.1,887.9 482.1,879.6 483.6,879.6 483.6,883.9 485.2,883.9 485.2,881.3 486.8,881.3 486.8,883.7 488.3,883.7 488.3,881.1 489.9,881.1 489.9,885.2 491.5,885.2 491.5,881.8 493.1,881.8 493.1,889.1 494.6,889.1 494.6,881.1 496.2,881.1 496.2,877.6 497.8,877.6 497.8,882.6 499.4,882.6 499.4,881.7 500.9,881.7 500.9,878.8 502.5,878.8 502.5,885.2 504.1,885.2 504.1,885.2 505.7,885.2 505.7,893.3 507.2,893.3 507.2,893.0 508.8,893.0 508.8,902.7 510.4,902.7 510.4,897.5 512.0,897.5 512.0,890.5 513.5,890.5 513.5,897.4 515.1,897.4 515.1,893.0 516.7,893.0 516.7,898.1 518.2,898.1 518.2,897.4 519.8,897.4 519.8,882.8 521.4,882.8 521.4,874.2 523.0,874.2 523.0,883.7 524.5,883.7 524.5,893.0 526.1,893.0 526.1,898.1 527.7,898.1 527.7,898.7 529.3,898.7 529.3,901.2 530.8,901.2 530.8,902.0 532.4,902.0 532.4,893.8 534.0,893.8 534.0,898.4 535.6,898.4 535.6,899.6 537.1,899.6 537.1,901.2 538.7,901.2 538.7,893.9 540.3,893.9 540.3,898.1 541.9,898.1 541.9,904.2 543.4,904.2 543.4,912.2 545.0,912.2 545.0,919.1 546.6,919.1 546.6,915.9 548.1,915.9 548.1,903.4 549.7,903.4 549.7,904.9 551.3,904.9 551.3,897.5 552.9,897.5 552.9,891.2 554.4,891.2 554.4,895.9 556.0,895.9 556.0,900.0 557.6,900.0 557.6,907.2 559.2,907.2 559.2,904.8 560.7,904.8 560.7,910.1 562.3,910.1 562.3,908.6 563.9,908.6 563.9,892.7 565.5,892.7 565.5,919.5 567.0,919.5 567.0,915.3 568.6,915.3 568.6,914.1 570.2,914.1 570.2,918.2 571.8,918.2 571.8,915.2 573.3,915.2 573.3,915.9 574.9,915.9 574.9,914.5 576.5,914.5 576.5,903.4 578.0,903.4 578.0,905.6 579.6,905.6 579.6,906.3 581.2,906.3 581.2,893.0 582.8,893.0 582.8,912.9 584.3,912.9 584.3,917.5 585.9,917.5 585.9,925.0 587.5,925.0 587.5,927.6 589.1,927.6 589.1,929.3 590.6,929.3 590.6,939.9 592.2,939.9 592.2,939.5 593.8,939.5 593.8,939.8 595.4,939.8 595.4,936.8 596.9,936.8 596.9,938.9 598.5,938.9 598.5,943.4 600.1,943.4 600.1,943.4 601.7,943.4 601.7,951.7 603.2,951.7 603.2,964.9 604.8,964.9 604.8,958.3 606.4,958.3 606.4,956.7 608.0,956.7 608.0,949.9 609.5,949.9 609.5,952.9 611.1,952.9 611.1,937.3 612.7,937.3 612.7,975.8 614.2,975.8 614.2,966.5 615.8,966.5 615.8,962.3 617.4,962.3 617.4,955.3 619.0,955.3 619.0,947.0 620.5,947.0 620.5,951.3 622.1,951.3 622.1,946.5 623.7,946.5 623.7,950.3 625.3,950.3 625.3,940.6 626.8,940.6 626.8,932.5 628.4,932.5 628.4,941.5 630.0,941.5 630.0,943.0 631.6,943.0 631.6,934.5 633.1,934.5 633.1,932.0 634.7,932.0 634.7,933.9 636.3,933.9 636.3,929.3 637.9,929.3 637.9,923.5 639.4,923.5 639.4,921.1 641.0,921.1 641.0,904.0 642.6,904.0 642.6,908.7 644.1,908.7 644.1,919.9 645.7,919.9 645.7,914.9 647.3,914.9 647.3,907.0 648.9,907.0 648.9,909.5 650.4,909.5 650.4,901.2 652.0,901.2 652.0,893.0 653.6,893.0 653.6,900.9 655.2,900.9 655.2,902.8 656.7,902.8 656.7,899.1 658.3,899.1 658.3,899.5 659.9,899.5 659.9,890.6 661.5,890.6 661.5,895.4 663.0,895.4 663.0,894.4 664.6,894.4 664.6,893.3 666.2,893.3 666.2,893.9 667.8,893.9 667.8,883.2 669.3,883.2 669.3,887.8 670.9,887.8 670.9,888.4 672.5,888.4 672.5,888.2 674.0,888.2 674.0,886.1 675.6,886.1 675.6,886.4 677.2,886.4 677.2,882.9 678.8,882.9 678.8,886.0 680.3,886.0 680.3,884.7 681.9,884.7 681.9,886.3 683.5,886.3 683.5,886.2 685.1,886.2 685.1,885.7 686.6,885.7 686.6,903.0 688.2,903.0 688.2,903.9 689.8,903.9 689.8,904.6 691.4,904.6 691.4,895.4 692.9,895.4 692.9,914.8 694.5,914.8 694.5,906.6 696.1,906.6 696.1,898.6 697.7,898.6 697.7,899.9 699.2,899.9 699.2,896.1 700.8,896.1 700.8,895.2 702.4,895.2 702.4,902.5 704.0,902.5 704.0,902.8 705.5,902.8 705.5,897.1 707.1,897.1 707.1,898.8 708.7,898.8 708.7,890.1 710.2,890.1 710.2,896.6 711.8,896.6 711.8,879.6 713.4,879.6 713.4,880.1 715.0,880.1 715.0,880.9 716.5,880.9 716.5,869.4 718.1,869.4 718.1,866.6 719.7,866.6 719.7,866.9 721.3,866.9 721.3,871.5 722.8,871.5 722.8,871.5 724.4,871.5 724.4,866.7 726.0,866.7 726.0,870.8 727.6,870.8 727.6,877.3 729.1,877.3 729.1,902.6 730.7,902.6 730.7,897.3 732.3,897.3 732.3,892.7 733.9,892.7 733.9,893.0 735.4,893.0 735.4,886.1 737.0,886.1 737.0,885.7 738.6,885.7 738.6,884.5 740.1,884.5 740.1,888.5 741.7,888.5 741.7,898.5 743.3,898.5 743.3,899.0 744.9,899.0 744.9,897.9 746.4,897.9 746.4,905.6 748.0,905.6 748.0,903.3 749.6,903.3 749.6,900.0 751.2,900.0 751.2,909.1 752.7,909.1 752.7,902.1 754.3,902.1 754.3,897.4 755.9,897.4 755.9,898.8 757.5,898.8 757.5,892.2 759.0,892.2 759.0,889.0 760.6,889.0 760.6,897.9 762.2,897.9 762.2,912.7 763.8,912.7 763.8,911.4 765.3,911.4 765.3,913.8 766.9,913.8 766.9,907.8 768.5,907.8 768.5,903.8 770.0,903.8 770.0,900.0 771.6,900.0 771.6,898.4 773.2,898.4 773.2,900.7 774.8,900.7 774.8,907.6 776.3,907.6 776.3,913.4 777.9,913.4 777.9,931.1 779.5,931.1 779.5,917.7 781.1,917.7 781.1,910.7 782.6,910.7 782.6,898.5 784.2,898.5 784.2,897.9 785.8,897.9 785.8,891.3 787.4,891.3 787.4,888.8 788.9,888.8 788.9,891.2 790.5,891.2 790.5,889.7 792.1,889.7 792.1,892.2 793.7,892.2 793.7,903.0 795.2,903.0 795.2,888.0 796.8,888.0 796.8,885.4 798.4,885.4 798.4,873.6 799.9,873.6 799.9,892.8 801.5,892.8 801.5,871.9 803.1,871.9 803.1,866.7 804.7,866.7 804.7,870.6 806.2,870.6 806.2,879.6 807.8,879.6 807.8,881.9 809.4,881.9 809.4,889.7 811.0,889.7 811.0,899.5 812.5,899.5 812.5,905.9 814.1,905.9 814.1,923.2 815.7,923.2 815.7,921.4 817.3,921.4 817.3,921.2 818.8,921.2 818.8,921.1 820.4,921.1 820.4,911.2 822.0,911.2 822.0,914.7 823.6,914.7 823.6,904.9 825.1,904.9 825.1,900.5 826.7,900.5 826.7,900.1 828.3,900.1 828.3,913.6 829.9,913.6 829.9,908.9 831.4,908.9 831.4,915.1 833.0,915.1 833.0,907.3 834.6,907.3 834.6,911.3 836.1,911.3 836.1,914.0 837.7,914.0 837.7,915.2 839.3,915.2 839.3,912.3 840.9,912.3 840.9,913.4 842.4,913.4 842.4,908.7 844.0,908.7 844.0,909.0 845.6,909.0 845.6,906.2 847.2,906.2 847.2,910.6 848.7,910.6 848.7,918.6 850.3,918.6 850.3,920.0 851.9,920.0 851.9,929.0 853.5,929.0 853.5,924.6 855.0,924.6 855.0,920.9 856.6,920.9 856.6,916.1 858.2,916.1 858.2,914.0 859.8,914.0 859.8,918.7 861.3,918.7 861.3,907.6 862.9,907.6 862.9,909.5 864.5,909.5 864.5,909.0 866.0,909.0 866.0,913.8 867.6,913.8 867.6,927.6 869.2,927.6 869.2,928.2 870.8,928.2 870.8,921.1 872.3,921.1 872.3,914.9 873.9,914.9 873.9,903.7 875.5,903.7 875.5,902.8 877.1,902.8 877.1,897.6 878.6,897.6 878.6,895.8 880.2,895.8 880.2,896.8 881.8,896.8 881.8,892.0 883.4,892.0 883.4,896.8 884.9,896.8 884.9,904.7 886.5,904.7 886.5,906.9 888.1,906.9 888.1,890.8 889.7,890.8 889.7,903.4 891.2,903.4 891.2,917.4 892.8,917.4 892.8,913.2 894.4,913.2 894.4,909.2 895.9,909.2 895.9,899.3 897.5,899.3 897.5,895.5 899.1,895.5 899.1,887.4 900.7,887.4 900.7,880.5 902.2,880.5 902.2,878.8 903.8,878.8 903.8,880.6 905.4,880.6 905.4,881.9 907.0,881.9 907.0,887.6 908.5,887.6 908.5,879.9 910.1,879.9 910.1,884.0 911.7,884.0 911.7,874.5 913.3,874.5 913.3,882.7 914.8,882.7 914.8,878.2 916.4,878.2 916.4,872.7 918.0,872.7 918.0,875.4 919.6,875.4 919.6,870.2 921.1,870.2 921.1,863.2 922.7,863.2 922.7,868.5 924.3,868.5 924.3,873.7 925.8,873.7 925.8,884.3 927.4,884.3 927.4,856.8 929.0,856.8 929.0,855.0 930.6,855.0 930.6,851.6 932.1,851.6 932.1,841.0 933.7,841.0 933.7,850.5 935.3,850.5 935.3,858.5 936.9,858.5 936.9,861.9 938.4,861.9 938.4,864.5 940.0,864.5 940.0,866.3 941.6,866.3 941.6,867.5 943.2,867.5 943.2,862.7 944.7,862.7 944.7,858.7 946.3,858.7 946.3,869.9 947.9,869.9 947.9,860.2 949.5,860.2 949.5,862.3 951.0,862.3 951.0,864.2 952.6,864.2 952.6,862.3 954.2,862.3 954.2,864.2 955.8,864.2 955.8,860.1 957.3,860.1 957.3,856.3 958.9,856.3 958.9,856.0 960.5,856.0 960.5,857.8 962.0,857.8 962.0,862.3 963.6,862.3 963.6,867.6 965.2,867.6 965.2,848.1 966.8,848.1 966.8,832.5 968.3,832.5 968.3,826.2 969.9,826.2 969.9,806.2 971.5,806.2 971.5,820.6 973.1,820.6 973.1,830.5 974.6,830.5 974.6,840.4 976.2,840.4 976.2,876.9 977.8,876.9 977.8,880.7 979.4,880.7 979.4,876.9 980.9,876.9 980.9,873.3 982.5,873.3 982.5,863.3 984.1,863.3 984.1,871.8 985.7,871.8 985.7,870.3 987.2,870.3 987.2,856.9 988.8,856.9 988.8,840.3 990.4,840.3 990.4,848.3 991.9,848.3 991.9,848.6 993.5,848.6 993.5,853.1 995.1,853.1 995.1,848.1 996.7,848.1 996.7,847.1 998.2,847.1 998.2,838.4 999.8,838.4 999.8,848.1 1001.4,848.1 1001.4,854.3 1003.0,854.3 1003.0,859.6 1004.5,859.6 1004.5,858.7 1006.1,858.7 1006.1,858.1 1007.7,858.1 1007.7,856.3 1009.3,856.3 1009.3,843.0 1010.8,843.0 1010.8,842.1 1012.4,842.1 1012.4,851.3 1014.0,851.3 1014.0,861.2 1015.6,861.2 1015.6,860.2 1017.1,860.2 1017.1,850.9 1018.7,850.9 1018.7,868.4 1020.3,868.4 1020.3,845.8 1021.8,845.8 1021.8,840.4 1023.4,840.4 1023.4,842.0 1025.0,842.0 1025.0,838.1 1026.6,838.1 1026.6,837.8 1028.1,837.8 1028.1,828.6 1029.7,828.6 1029.7,843.5 1031.3,843.5 1031.3,849.0 1032.9,849.0 1032.9,853.1 1034.4,853.1 1034.4,860.9 1036.0,860.9 1036.0,873.0 1037.6,873.0 1037.6,871.9 1039.2,871.9 1039.2,873.0 1040.7,873.0 1040.7,887.5 1042.3,887.5 1042.3,884.9 1043.9,884.9 1043.9,884.5 1045.5,884.5 1045.5,873.8 1047.0,873.8 1047.0,865.0 1048.6,865.0 1048.6,861.0 1050.2,861.0 1050.2,853.2 1051.7,853.2 1051.7,859.3 1053.3,859.3 1053.3,860.6 1054.9,860.6 1054.9,862.3 1056.5,862.3 1056.5,865.7 1058.0,865.7 1058.0,861.1 1059.6,861.1 1059.6,864.0 1061.2,864.0 1061.2,860.9 1062.8,860.9 1062.8,850.2 1064.3,850.2 1064.3,856.7 1065.9,856.7 1065.9,862.8 1067.5,862.8 1067.5,887.7 1069.1,887.7 1069.1,882.7 1070.6,882.7 1070.6,881.4 1072.2,881.4 1072.2,875.8 1073.8,875.8 1073.8,875.6 1075.4,875.6 1075.4,872.3 1076.9,872.3 1076.9,880.9 1078.5,880.9 1078.5,873.9 1080.1,873.9 1080.1,871.5 1081.7,871.5 1081.7,867.8 1083.2,867.8 1083.2,858.0 1084.8,858.0 1084.8,861.5 1086.4,861.5 1086.4,840.6 1087.9,840.6 1087.9,852.7 1089.5,852.7 1089.5,846.1 1091.1,846.1 1091.1,849.1 1092.7,849.1 1092.7,843.6 1094.2,843.6 1094.2,841.2 1095.8,841.2 1095.8,851.1 1097.4,851.1 1097.4,853.1 1099.0,853.1 1099.0,858.8 1100.5,858.8 1100.5,869.6 1102.1,869.6 1102.1,862.5 1103.7,862.5 1103.7,855.0 1105.3,855.0 1105.3,868.3 1106.8,868.3 1106.8,857.0 1108.4,857.0 1108.4,869.4 1110.0,869.4 1110.0,866.3 1111.6,866.3 1111.6,879.3 1113.1,879.3 1113.1,905.9 1114.7,905.9 1114.7,896.0 1116.3,896.0 1116.3,897.7 1117.8,897.7 1117.8,903.8 1119.4,903.8 1119.4,903.6 1121.0,903.6 1121.0,892.5 1122.6,892.5 1122.6,886.1 1124.1,886.1 1124.1,880.9 1125.7,880.9 1125.7,878.3 1127.3,878.3 1127.3,870.5 1128.9,870.5 1128.9,876.7 1130.4,876.7 1130.4,874.3 1132.0,874.3 1132.0,875.2 1133.6,875.2 1133.6,881.7 1135.2,881.7 1135.2,876.4 1136.7,876.4 1136.7,869.4 1138.3,869.4 1138.3,869.2 1139.9,869.2 1139.9,872.0 1141.5,872.0 1141.5,869.6 1143.0,869.6 1143.0,866.3 1144.6,866.3 1144.6,862.7 1146.2,862.7 1146.2,856.4 1147.7,856.4 1147.7,860.9 1149.3,860.9 1149.3,856.7 1150.9,856.7 1150.9,861.6 1152.5,861.6 1152.5,860.0 1154.0,860.0 1154.0,857.9 1155.6,857.9 1155.6,851.2 1157.2,851.2 1157.2,860.4 1158.8,860.4 1158.8,858.3 1160.3,858.3 1160.3,850.3 1161.9,850.3 1161.9,833.9 1163.5,833.9 1163.5,820.8 1165.1,820.8 1165.1,818.7 1166.6,818.7 1166.6,819.3 1168.2,819.3 1168.2,814.8 1169.8,814.8 1169.8,818.4 1171.4,818.4 1171.4,810.8 1172.9,810.8 1172.9,810.9 1174.5,810.9 1174.5,813.8 1176.1,813.8 1176.1,832.4 1177.6,832.4 1177.6,826.9 1179.2,826.9 1179.2,822.3 1180.8,822.3 1180.8,816.5 1182.4,816.5 1182.4,811.1 1183.9,811.1 1183.9,805.9 1185.5,805.9 1185.5,819.2 1187.1,819.2 1187.1,817.2 1188.7,817.2 1188.7,820.2 1190.2,820.2 1190.2,816.3 1191.8,816.3 1191.8,814.2 1193.4,814.2 1193.4,808.8 1195.0,808.8 1195.0,814.5 1196.5,814.5 1196.5,818.7 1198.1,818.7 1198.1,817.3 1199.7,817.3 1199.7,825.0 1201.3,825.0 1201.3,809.3 1202.8,809.3 1202.8,811.5 1204.4,811.5 1204.4,812.1 1206.0,812.1 1206.0,786.6 1207.5,786.6 1207.5,808.5 1209.1,808.5 1209.1,818.5 1210.7,818.5 1210.7,816.1 1212.3,816.1 1212.3,821.0 1213.8,821.0 1213.8,832.3 1215.4,832.3 1215.4,845.6 1217.0,845.6 1217.0,868.5 1218.6,868.5 1218.6,855.0 1220.1,855.0 1220.1,861.0 1221.7,861.0 1221.7,855.8 1223.3,855.8 1223.3,858.0 1224.9,858.0 1224.9,872.1 1226.4,872.1 1226.4,861.4 1228.0,861.4 1228.0,866.8 1229.6,866.8 1229.6,871.0 1231.2,871.0 1231.2,887.8 1232.7,887.8 1232.7,879.6 1234.3,879.6 1234.3,886.7 1235.9,886.7 1235.9,898.5 1237.5,898.5 1237.5,902.0 1239.0,902.0 1239.0,911.0 1240.6,911.0 1240.6,918.1 1242.2,918.1 1242.2,906.0 1243.7,906.0 1243.7,905.3 1245.3,905.3 1245.3,889.4 1246.9,889.4 1246.9,890.7 1248.5,890.7 1248.5,889.7 1250.0,889.7 1250.0,898.2 1251.6,898.2 1251.6,899.0 1253.2,899.0 1253.2,895.4 1254.8,895.4 1254.8,900.2 1256.3,900.2 1256.3,897.9 1257.9,897.9 1257.9,908.0 1259.5,908.0 1259.5,911.3 1261.1,911.3 1261.1,913.1 1262.6,913.1 1262.6,917.5 1264.2,917.5 1264.2,919.0 1265.8,919.0 1265.8,916.8 1267.4,916.8 1267.4,920.8 1268.9,920.8 1268.9,919.2 1270.5,919.2 1270.5,926.6 1272.1,926.6 1272.1,920.9 1273.6,920.9 1273.6,927.4 1275.2,927.4 1275.2,932.5 1276.8,932.5 1276.8,936.5 1278.4,936.5 1278.4,946.3 1279.9,946.3 1279.9,948.6 1281.5,948.6 1281.5,963.0 1283.1,963.0 1283.1,962.6 1284.7,962.6 1284.7,951.6 1286.2,951.6 1286.2,924.8 1287.8,924.8 1287.8,939.2 1289.4,939.2 1289.4,943.9 1291.0,943.9 1291.0,946.5 1292.5,946.5 1292.5,937.3 1294.1,937.3 1294.1,941.6 1295.7,941.6 1295.7,940.1 1297.3,940.1 1297.3,950.4 1298.8,950.4 1298.8,945.8 1300.4,945.8 1300.4,935.8 1302.0,935.8 1302.0,929.1 1303.5,929.1 1303.5,905.5 1305.1,905.5 1305.1,920.5 1306.7,920.5 1306.7,937.1 1308.3,937.1 1308.3,947.2 1309.8,947.2 1309.8,962.2 1311.4,962.2 1311.4,959.8 1313.0,959.8 1313.0,958.1 1314.6,958.1 1314.6,965.8 1316.1,965.8 1316.1,953.3 1317.7,953.3 1317.7,951.8 1319.3,951.8 1319.3,946.9 1320.9,946.9 1320.9,941.5 1322.4,941.5 1322.4,943.1 1324.0,943.1 1324.0,946.7 1325.6,946.7 1325.6,947.2 1327.2,947.2 1327.2,954.0 1328.7,954.0 1328.7,949.7 1330.3,949.7 1330.3,961.5 1331.9,961.5 1331.9,979.0 1333.5,979.0 1333.5,970.1 1335.0,970.1 1335.0,960.2 1336.6,960.2 1336.6,965.9 1338.2,965.9 1338.2,970.5 1339.7,970.5 1339.7,967.5 1341.3,967.5 1341.3,968.8 1342.9,968.8 1342.9,964.9 1344.5,964.9 1344.5,962.1 1346.0,962.1 1346.0,961.9 1347.6,961.9 1347.6,959.3 1349.2,959.3 1349.2,963.9 1350.8,963.9 1350.8,961.3 1352.3,961.3 1352.3,973.6 1353.9,973.6 1353.9,956.3 1355.5,956.3 1355.5,956.5 1357.1,956.5 1357.1,956.5 1358.6,956.5 1358.6,949.8 1360.2,949.8 1360.2,946.2 1361.8,946.2 1361.8,942.5 1363.4,942.5 1363.4,936.4 1364.9,936.4 1364.9,933.8 1366.5,933.8 1366.5,932.0 1368.1,932.0 1368.1,929.7 1369.6,929.7 1369.6,931.4 1371.2,931.4 1371.2,930.0 1372.8,930.0 1372.8,922.4 1374.4,922.4 1374.4,929.1 1375.9,929.1 1375.9,934.5 1377.5,934.5 1377.5,936.1 1379.1,936.1 1379.1,930.1 1380.7,930.1 1380.7,933.9 1382.2,933.9 1382.2,928.5 1383.8,928.5 1383.8,928.1 1385.4,928.1 1385.4,927.5 1387.0,927.5 1387.0,930.2 1388.5,930.2 1388.5,937.8 1390.1,937.8 1390.1,943.6 1391.7,943.6 1391.7,934.4 1393.3,934.4 1393.3,930.0 1394.8,930.0 1394.8,922.0 1396.4,922.0 1396.4,909.9 1398.0,909.9 1398.0,915.4 1399.5,915.4 1399.5,916.2 1401.1,916.2 1401.1,920.4 1402.7,920.4 1402.7,916.5 1404.3,916.5 1404.3,916.4 1405.8,916.4 1405.8,923.2 1407.4,923.2 1407.4,913.7 1409.0,913.7 1409.0,901.5 1410.6,901.5 1410.6,895.5 1412.1,895.5 1412.1,881.7 1413.7,881.7 1413.7,876.0 1415.3,876.0 1415.3,872.8 1416.9,872.8 1416.9,871.9 1418.4,871.9 1418.4,871.2 1420.0,871.2 1420.0,876.4 1421.6,876.4 1421.6,878.8 1423.2,878.8 1423.2,880.2 1424.7,880.2 1424.7,876.2 1426.3,876.2 1426.3,874.0 1427.9,874.0 1427.9,878.1 1429.4,878.1 1429.4,869.3 1431.0,869.3 1431.0,865.3 1432.6,865.3 1432.6,864.3 1434.2,864.3 1434.2,859.4 1435.7,859.4 1435.7,856.9 1437.3,856.9 1437.3,853.4 1438.9,853.4 1438.9,871.5 1440.5,871.5 1440.5,884.3 1442.0,884.3 1442.0,881.3 1443.6,881.3 1443.6,880.2 1445.2,880.2 1445.2,880.0 1446.8,880.0 1446.8,875.6 1448.3,875.6 1448.3,875.7 1449.9,875.7 1449.9,875.4 1451.5,875.4 1451.5,877.8 1453.1,877.8 1453.1,877.7 1454.6,877.7 1454.6,883.9 1456.2,883.9 1456.2,877.0 1457.8,877.0 1457.8,874.5 1459.3,874.5 1459.3,869.5 1460.9,869.5 1460.9,867.7 1462.5,867.7 1462.5,867.0 1464.1,867.0 1464.1,866.2 1465.6,866.2 1465.6,867.6 1467.2,867.6 1467.2,868.2 1468.8,868.2 1468.8,869.6 1470.4,869.6 1470.4,872.0 1471.9,872.0 1471.9,874.8 1473.5,874.8 1473.5,881.5 1475.1,881.5 1475.1,881.5 1476.7,881.5 1476.7,886.5 1478.2,886.5 1478.2,891.1 1479.8,891.1 1479.8,890.7 1481.4,890.7 1481.4,890.1 1483.0,890.1 1483.0,891.3 1484.5,891.3 1484.5,887.3 1486.1,887.3 1486.1,882.4 1487.7,882.4 1487.7,876.8 1489.3,876.8 1489.3,868.2 1490.8,868.2 1490.8,864.1 1492.4,864.1 1492.4,862.0 1494.0,862.0 1494.0,859.0 1495.5,859.0 1495.5,860.6 1497.1,860.6 1497.1,864.8 1498.7,864.8 1498.7,866.1 1500.3,866.1 1500.3,865.5 1501.8,865.5 1501.8,868.5 1503.4,868.5 1503.4,871.3 1505.0,871.3 1505.0,872.1 1506.6,872.1 1506.6,876.6 1508.1,876.6 1508.1,877.7 1509.7,877.7 1509.7,875.8 1511.3,875.8 1511.3,873.3 1512.9,873.3 1512.9,870.3 1514.4,870.3 1514.4,867.8 1516.0,867.8 1516.0,862.0 1517.6,862.0 1517.6,862.6 1519.2,862.6 1519.2,863.0 1520.7,863.0 1520.7,859.8 1522.3,859.8 1522.3,856.7 1523.9,856.7 1523.9,855.4 1525.4,855.4 1525.4,854.2 1527.0,854.2 1527.0,853.3 1528.6,853.3 1528.6,860.8 1530.2,860.8 1530.2,858.2 1531.7,858.2 1531.7,857.8 1533.3,857.8 1533.3,858.1 1534.9,858.1 1534.9,859.1 1536.5,859.1 1536.5,860.3 1538.0,860.3 1538.0,860.0 1539.6,860.0 1539.6,859.1 1541.2,859.1 1541.2,854.2 1542.8,854.2 1542.8,854.0 1544.3,854.0 1544.3,852.9 1545.9,852.9 1545.9,853.5 1547.5,853.5 1547.5,849.6 1549.1,849.6 1549.1,850.0 1550.6,850.0 1550.6,846.7 1552.2,846.7 1552.2,847.2 1553.8,847.2 1553.8,848.4 1555.3,848.4 1555.3,851.2 1556.9,851.2 1556.9,852.7 1558.5,852.7 1558.5,852.6 1560.1,852.6 1560.1,852.8 1561.6,852.8 1561.6,855.6 1563.2,855.6 1563.2,858.9 1564.8,858.9 1564.8,861.7 1566.4,861.7 1566.4,863.1 1567.9,863.1 1567.9,866.9 1569.5,866.9 1569.5,870.7 1571.1,870.7 1571.1,873.5 1572.7,873.5 1572.7,872.9 1574.2,872.9 1574.2,874.1 1575.8,874.1 1575.8,869.0 1577.4,869.0 1577.4,868.1 1579.0,868.1 1579.0,866.3 1580.5,866.3 1580.5,869.1 1582.1,869.1 1582.1,863.5 1583.7,863.5 1583.7,865.2 1585.2,865.2 1585.2,867.4 1586.8,867.4 1586.8,866.0 1588.4,866.0 1588.4,868.6 1590.0,868.6 1590.0,869.2 1591.5,869.2 1591.5,866.9 1593.1,866.9 1593.1,866.2 1594.7,866.2 1594.7,865.1 1596.3,865.1 1596.3,862.6 1597.8,862.6 1597.8,859.7 1599.4,859.7 1599.4,858.0 1601.0,858.0 1601.0,855.0 1602.6,855.0 1602.6,854.6 1604.1,854.6 1604.1,858.1 1605.7,858.1 1605.7,860.4 1607.3,860.4 1607.3,860.8 1608.9,860.8 1608.9,862.6 1610.4,862.6 1610.4,859.2 1612.0,859.2 1612.0,863.9 1613.6,863.9 1613.6,867.2 1615.2,867.2 1615.2,871.4 1616.7,871.4 1616.7,867.9 1618.3,867.9 1618.3,873.1 1619.9,873.1 1619.9,872.4 1621.4,872.4 1621.4,883.3 1623.0,883.3 1623.0,884.4 1624.6,884.4 1624.6,883.4 1626.2,883.4 1626.2,884.6 1627.7,884.6 1627.7,882.5 1629.3,882.5 1629.3,882.4 1630.9,882.4 1630.9,882.3 1632.5,882.3 1632.5,882.6 1634.0,882.6 1634.0,888.4 1635.6,888.4 1635.6,887.9 1637.2,887.9 1637.2,894.9 1638.8,894.9 1638.8,901.5 1640.3,901.5 1640.3,908.1 1641.9,908.1 1641.9,908.8 1643.5,908.8 1643.5,899.6 1645.1,899.6 1645.1,892.7 1646.6,892.7 1646.6,883.7 1648.2,883.7 1648.2,875.4 1649.8,875.4 1649.8,873.2 1651.3,873.2 1651.3,872.7 1652.9,872.7 1652.9,871.8 1654.5,871.8 1654.5,872.2 1656.1,872.2 1656.1,872.1 1657.6,872.1 1657.6,869.4 1659.2,869.4 1659.2,869.6 1660.8,869.6 1660.8,870.4 1662.4,870.4 1662.4,869.7 1663.9,869.7 1663.9,869.4 1665.5,869.4 1665.5,870.3 1667.1,870.3 1667.1,873.8 1668.7,873.8 1668.7,879.6 1670.2,879.6 1670.2,884.7 1671.8,884.7 1671.8,889.1 1673.4,889.1 1673.4,886.6 1675.0,886.6 1675.0,877.7 1676.5,877.7 1676.5,862.6 1678.1,862.6 1678.1,865.6 1679.7,865.6 1679.7,868.6 1681.2,868.6 1681.2,872.2 1682.8,872.2 1682.8,875.3 1684.4,875.3 1684.4,874.8 1686.0,874.8 1686.0,879.0 1687.5,879.0 1687.5,877.7 1689.1,877.7 1689.1,880.6 1690.7,880.6 1690.7,882.5 1692.3,882.5 1692.3,880.6 1693.8,880.6 1693.8,877.4 1695.4,877.4 1695.4,878.4 1697.0,878.4 1697.0,877.9 1698.6,877.9 1698.6,875.8 1700.1,875.8 1700.1,874.8 1701.7,874.8 1701.7,874.4 1703.3,874.4 1703.3,879.7 1704.9,879.7 1704.9,876.0 1706.4,876.0 1706.4,882.6 1708.0,882.6 1708.0,881.0 1709.6,881.0 1709.6,881.2 1711.2,881.2 1711.2,881.6 1712.7,881.6 1712.7,877.3 1714.3,877.3 1714.3,881.0 1715.9,881.0 1715.9,882.8 1717.4,882.8 1717.4,885.2 1719.0,885.2 1719.0,883.9 1720.6,883.9 1720.6,882.6 1722.2,882.6 1722.2,883.9 1723.7,883.9 1723.7,882.2 1725.3,882.2 1725.3,881.7 1726.9,881.7 1726.9,884.5 1728.5,884.5 1728.5,884.3 1730.0,884.3 1730.0,876.9 1731.6,876.9 1731.6,876.0 1733.2,876.0 1733.2,869.7 1734.8,869.7 1734.8,870.1 1736.3,870.1 1736.3,869.0 1737.9,869.0 1737.9,867.5 1739.5,867.5 1739.5,867.5 1741.1,867.5 1741.1,867.9 1742.6,867.9 1742.6,865.1 1744.2,865.1 1744.2,864.0 1745.8,864.0 1745.8,863.8 1747.3,863.8 1747.3,860.6 1748.9,860.6 1748.9,858.4 1750.5,858.4 1750.5,858.2 1752.1,858.2 1752.1,860.6 1753.6,860.6 1753.6,861.7 1755.2,861.7 1755.2,860.7 1756.8,860.7 1756.8,865.8 1758.4,865.8 1758.4,866.2 1759.9,866.2 1759.9,867.3 1761.5,867.3 1761.5,864.8 1763.1,864.8 1763.1,866.3 1764.7,866.3 1764.7,864.6 1766.2,864.6 1766.2,862.5 1767.8,862.5 1767.8,863.9 1769.4,863.9 1769.4,861.3 1771.0,861.3 1771.0,858.2 1772.5,858.2 1772.5,854.9 1774.1,854.9 1774.1,864.5 1775.7,864.5 1775.7,857.4 1777.2,857.4 1777.2,850.0 1778.8,850.0 1778.8,844.7 1780.4,844.7 1780.4,850.6 1782.0,850.6 1782.0,847.8 1783.5,847.8 1783.5,848.8 1785.1,848.8 1785.1,845.4 1786.7,845.4 1786.7,850.2 1788.3,850.2 1788.3,850.4 1789.8,850.4 1789.8,852.0 1791.4,852.0 1791.4,854.8 1793.0,854.8 1793.0,862.9 1794.6,862.9 1794.6,863.9 1796.1,863.9 1796.1,867.8 1797.7,867.8 1797.7,867.7 1799.3,867.7 1799.3,867.0 1800.9,867.0 1800.9,864.9 1802.4,864.9 1802.4,865.8 1804.0,865.8 1804.0,865.6 1805.6,865.6 1805.6,862.9 1807.1,862.9 1807.1,864.6 1808.7,864.6 1808.7,868.4 1810.3,868.4 1810.3,866.3 1811.9,866.3 1811.9,864.2 1813.4,864.2 1813.4,863.8 1815.0,863.8 1815.0,861.6 1816.6,861.6 1816.6,864.2 1818.2,864.2 1818.2,866.7 1819.7,866.7 1819.7,867.7 1821.3,867.7 1821.3,868.8 1822.9,868.8 1822.9,869.2 1824.5,869.2 1824.5,870.5 1826.0,870.5 1826.0,871.5 1827.6,871.5 1827.6,867.7 1829.2,867.7 1829.2,871.0 1830.8,871.0 1830.8,873.4 1832.3,873.4 1832.3,867.3 1833.9,867.3 1833.9,873.4 1835.5,873.4 1835.5,873.3 1837.0,873.3 1837.0,874.0 1838.6,874.0 1838.6,871.1 1840.2,871.1 1840.2,869.2 1841.8,869.2 1841.8,867.0 1843.3,867.0 1843.3,865.8 1844.9,865.8 1844.9,866.7 1846.5,866.7 1846.5,868.0 1848.1,868.0 1848.1,863.0 1849.6,863.0 1849.6,865.0 1851.2,865.0 1851.2,867.2 1852.8,867.2 1852.8,863.2 1854.4,863.2 1854.4,861.2 1855.9,861.2 1855.9,864.4 1857.5,864.4 1857.5,866.9 1859.1,866.9 1859.1,868.4 1860.7,868.4 1860.7,865.6 1862.2,865.6 1862.2,867.3 1863.8,867.3 1863.8,869.8 1865.4,869.8 1865.4,873.9 1867.0,873.9 1867.0,877.0 1868.5,877.0 1868.5,871.4 1870.1,871.4 1870.1,873.1 1871.7,873.1 1871.7,872.7 1873.2,872.7 1873.2,874.9 1874.8,874.9 1874.8,869.6 1876.4,869.6 1876.4,869.7 1878.0,869.7 1878.0,874.5 1879.5,874.5 1879.5,877.5 1881.1,877.5 1881.1,874.8 1882.7,874.8 1882.7,875.2 1884.3,875.2 1884.3,879.8 1885.8,879.8 1885.8,873.7 1887.4,873.7 1887.4,869.7 1889.0,869.7 1889.0,868.1 1890.6,868.1 1890.6,871.1 1892.1,871.1 1892.1,872.9 1893.7,872.9 1893.7,877.2 1895.3,877.2 1895.3,879.4 1896.9,879.4 1896.9,872.9 1898.4,872.9 1898.4,865.2" stroke="#ff0000" stroke-width="3.3" fill="none" stroke-linejoin="miter" stroke-miterlimit="2"/></g></svg><div class="mt" style="left:39.6px;top:1045.64px;font-size:14.2px;color:#e0e0e0;transform:scaleY(1.39);font-weight:normal;-webkit-text-stroke:0.35px #e0e0e0;"><i style="width:9.70px">0</i><i style="width:9.70px">5</i></div><div class="mt" style="left:101.3px;top:1045.64px;font-size:14.2px;color:#e0e0e0;transform:scaleY(1.39);font-weight:bold;-webkit-text-stroke:0.35px #e0e0e0;"><i style="width:9.70px">0</i><i style="width:9.70px">6</i></div><div class="mt" style="left:143.1px;top:1045.64px;font-size:14.2px;color:#e0e0e0;transform:scaleY(1.39);font-weight:normal;-webkit-text-stroke:0.35px #e0e0e0;"><i style="width:9.70px">0</i><i style="width:9.70px">9</i></div><div class="mt" style="left:238.2px;top:1045.64px;font-size:14.2px;color:#e0e0e0;transform:scaleY(1.39);font-weight:normal;-webkit-text-stroke:0.35px #e0e0e0;"><i style="width:9.70px">1</i><i style="width:9.70px">0</i></div><div class="mt" style="left:333.7px;top:1045.64px;font-size:14.2px;color:#e0e0e0;transform:scaleY(1.39);font-weight:normal;-webkit-text-stroke:0.35px #e0e0e0;"><i style="width:9.70px">1</i><i style="width:9.70px">1</i></div><div class="mt" style="left:428.8px;top:1045.64px;font-size:14.2px;color:#e0e0e0;transform:scaleY(1.39);font-weight:normal;-webkit-text-stroke:0.35px #e0e0e0;"><i style="width:9.70px">1</i><i style="width:9.70px">2</i></div><div class="mt" style="left:522.9px;top:1045.64px;font-size:14.2px;color:#e0e0e0;transform:scaleY(1.39);font-weight:normal;-webkit-text-stroke:0.35px #e0e0e0;"><i style="width:9.70px">1</i><i style="width:9.70px">3</i></div><div class="mt" style="left:618.0px;top:1045.64px;font-size:14.2px;color:#e0e0e0;transform:scaleY(1.39);font-weight:normal;-webkit-text-stroke:0.35px #e0e0e0;"><i style="width:9.70px">1</i><i style="width:9.70px">4</i></div><div class="mt" style="left:711.2px;top:1045.64px;font-size:14.2px;color:#e0e0e0;transform:scaleY(1.39);font-weight:normal;-webkit-text-stroke:0.35px #e0e0e0;"><i style="width:9.70px">1</i><i style="width:9.70px">5</i></div><div class="mt" style="left:773.2px;top:1045.64px;font-size:14.2px;color:#e0e0e0;transform:scaleY(1.39);font-weight:normal;-webkit-text-stroke:0.35px #e0e0e0;"><i style="width:9.70px">1</i><i style="width:9.70px">7</i></div><div class="mt" style="left:867.3px;top:1045.64px;font-size:14.2px;color:#e0e0e0;transform:scaleY(1.39);font-weight:normal;-webkit-text-stroke:0.35px #e0e0e0;"><i style="width:9.70px">1</i><i style="width:9.70px">8</i></div><div class="mt" style="left:957.9px;top:1045.64px;font-size:14.2px;color:#e0e0e0;transform:scaleY(1.39);font-weight:normal;-webkit-text-stroke:0.35px #e0e0e0;"><i style="width:9.70px">1</i><i style="width:9.70px">9</i></div><div class="mt" style="left:1045.0px;top:1045.64px;font-size:14.2px;color:#e0e0e0;transform:scaleY(1.39);font-weight:normal;-webkit-text-stroke:0.35px #e0e0e0;"><i style="width:9.70px">2</i><i style="width:9.70px">0</i></div><div class="mt" style="left:1129.3px;top:1045.64px;font-size:14.2px;color:#e0e0e0;transform:scaleY(1.39);font-weight:normal;-webkit-text-stroke:0.35px #e0e0e0;"><i style="width:9.70px">2</i><i style="width:9.70px">1</i></div><div class="mt" style="left:1196.2px;top:1045.64px;font-size:14.2px;color:#e0e0e0;transform:scaleY(1.39);font-weight:normal;-webkit-text-stroke:0.35px #e0e0e0;"><i style="width:9.70px">2</i><i style="width:9.70px">2</i></div><div class="mt" style="left:1283.7px;top:1045.64px;font-size:14.2px;color:#e0e0e0;transform:scaleY(1.39);font-weight:normal;-webkit-text-stroke:0.35px #e0e0e0;"><i style="width:9.70px">2</i><i style="width:9.70px">3</i></div><div class="mt" style="left:1364.0px;top:1045.64px;font-size:14.2px;color:#e0e0e0;transform:scaleY(1.39);font-weight:normal;-webkit-text-stroke:0.35px #e0e0e0;"><i style="width:9.70px">0</i><i style="width:9.70px">0</i></div><div class="mt" style="left:1452.5px;top:1045.64px;font-size:14.2px;color:#e0e0e0;transform:scaleY(1.39);font-weight:normal;-webkit-text-stroke:0.35px #e0e0e0;"><i style="width:9.70px">0</i><i style="width:9.70px">1</i></div><div class="mt" style="left:1548.0px;top:1045.64px;font-size:14.2px;color:#e0e0e0;transform:scaleY(1.39);font-weight:normal;-webkit-text-stroke:0.35px #e0e0e0;"><i style="width:9.70px">0</i><i style="width:9.70px">2</i></div><div class="mt" style="left:1641.7px;top:1045.64px;font-size:14.2px;color:#e0e0e0;transform:scaleY(1.39);font-weight:normal;-webkit-text-stroke:0.35px #e0e0e0;"><i style="width:9.70px">0</i><i style="width:9.70px">3</i></div><div class="mt" style="left:1737.5px;top:1045.64px;font-size:14.2px;color:#e0e0e0;transform:scaleY(1.39);font-weight:normal;-webkit-text-stroke:0.35px #e0e0e0;"><i style="width:9.70px">0</i><i style="width:9.70px">4</i></div><div class="mt" style="left:1820.1px;top:1045.64px;font-size:14.2px;color:#e0e0e0;transform:scaleY(1.39);font-weight:normal;-webkit-text-stroke:0.35px #e0e0e0;"><i style="width:9.70px">0</i><i style="width:9.70px">5</i></div><div class="mt" style="left:1874.1px;top:1045.64px;font-size:14.2px;color:#e0e0e0;transform:scaleY(1.39);font-weight:normal;-webkit-text-stroke:0.35px #e0e0e0;"><i style="width:9.70px">0</i><i style="width:9.70px">6</i></div><div class="mt" style="left:129.5px;top:1021.66px;font-size:13.5px;color:#d0d0d0;transform:scaleY(1.45);font-weight:normal;-webkit-text-stroke:0.3px #d0d0d0;"><i style="width:9.00px">0</i><i style="width:9.00px">9</i></div><div class="mt" style="left:1365px;top:1021.66px;font-size:13.5px;color:#d0d0d0;transform:scaleY(1.45);font-weight:normal;-webkit-text-stroke:0.3px #d0d0d0;"><i style="width:9.00px">1</i><i style="width:9.00px">0</i></div><div class="mt" style="left:1907.8px;top:762.85px;font-size:14.2px;color:#d8d8d8;transform:scaleY(1.53);font-weight:normal;-webkit-text-stroke:0.35px #d8d8d8;"><i style="width:9.74px">1</i><i style="width:9.74px">6</i><i style="width:9.74px">,</i><i style="width:9.74px">1</i><i style="width:9.74px">0</i><i style="width:9.74px">0</i></div><div class="mt" style="left:1907.8px;top:811.85px;font-size:14.2px;color:#d8d8d8;transform:scaleY(1.53);font-weight:normal;-webkit-text-stroke:0.35px #d8d8d8;"><i style="width:9.74px">1</i><i style="width:9.74px">6</i><i style="width:9.74px">,</i><i style="width:9.74px">0</i><i style="width:9.74px">0</i><i style="width:9.74px">0</i></div><div class="mt" style="left:1907.8px;top:860.85px;font-size:14.2px;color:#d8d8d8;transform:scaleY(1.53);font-weight:normal;-webkit-text-stroke:0.35px #d8d8d8;"><i style="width:9.74px">1</i><i style="width:9.74px">5</i><i style="width:9.74px">,</i><i style="width:9.74px">9</i><i style="width:9.74px">0</i><i style="width:9.74px">0</i></div><div class="mt" style="left:1907.8px;top:909.85px;font-size:14.2px;color:#d8d8d8;transform:scaleY(1.53);font-weight:normal;-webkit-text-stroke:0.35px #d8d8d8;"><i style="width:9.74px">1</i><i style="width:9.74px">5</i><i style="width:9.74px">,</i><i style="width:9.74px">8</i><i style="width:9.74px">0</i><i style="width:9.74px">0</i></div><div class="mt" style="left:1907.8px;top:958.85px;font-size:14.2px;color:#d8d8d8;transform:scaleY(1.53);font-weight:normal;-webkit-text-stroke:0.35px #d8d8d8;"><i style="width:9.74px">1</i><i style="width:9.74px">5</i><i style="width:9.74px">,</i><i style="width:9.74px">7</i><i style="width:9.74px">0</i><i style="width:9.74px">0</i></div><div class="mt" style="left:1907.8px;top:1008.35px;font-size:14.2px;color:#d8d8d8;transform:scaleY(1.53);font-weight:normal;-webkit-text-stroke:0.35px #d8d8d8;"><i style="width:9.74px">1</i><i style="width:9.74px">5</i><i style="width:9.74px">,</i><i style="width:9.74px">6</i><i style="width:9.74px">0</i><i style="width:9.74px">0</i></div><div class="mt" style="left:1907.8px;top:1057.35px;font-size:14.2px;color:#d8d8d8;transform:scaleY(1.53);font-weight:normal;-webkit-text-stroke:0.35px #d8d8d8;"><i style="width:9.74px">1</i><i style="width:9.74px">5</i><i style="width:9.74px">,</i><i style="width:9.74px">5</i><i style="width:9.74px">0</i><i style="width:9.74px">0</i></div><div class="a" style="left:1906.5px;top:841px;width:94.5px;height:32px;background:#d4d4d4;border-top:1.2px solid #f0f0f0;border-left:1.2px solid #f0f0f0"></div><div class="mt" style="left:1921.7px;top:845.40px;font-size:14.8px;color:#000;transform:scaleY(1.4);font-weight:bold;-webkit-text-stroke:0.5px #000;"><i style="width:10.10px">1</i><i style="width:10.10px">5</i><i style="width:10.10px">,</i><i style="width:10.10px">9</i><i style="width:10.10px">5</i><i style="width:10.10px">4</i></div><div class="mt" style="left:11px;top:758.45px;font-size:14.2px;color:#d4d4d4;transform:scaleY(1.53);font-weight:normal;-webkit-text-stroke:0.35px #d4d4d4;"><i style="width:9.65px">[</i><i style="width:19.30px;transform:scale(1.3028,0.8515);transform-origin:50% 72%">金</i><i style="width:9.65px">&nbsp;</i><i style="width:9.65px">2</i><i style="width:9.65px">6</i><i style="width:9.65px">/</i><i style="width:9.65px">1</i><i style="width:9.65px">2</i><i style="width:9.65px">&nbsp;</i><i style="width:9.65px">2</i><i style="width:9.65px">6</i><i style="width:9.65px">,</i><i style="width:9.65px">2</i><i style="width:9.65px">2</i><i style="width:9.65px">3</i><i style="width:19.30px;transform:scale(2.0194,1.3198);transform-origin:50% 62%;-webkit-text-stroke:0">×</i><i style="width:9.65px">1</i><i style="width:9.65px">.</i><i style="width:9.65px">0</i><i style="width:9.65px">0</i><i style="width:9.65px">]</i><i style="width:19.30px;transform:scale(1.3028,0.8515);transform-origin:50% 72%">−</i><i style="width:9.65px">[</i><i style="width:19.30px;transform:scale(1.3028,0.8515);transform-origin:50% 72%">白</i><i style="width:19.30px;transform:scale(1.3028,0.8515);transform-origin:50% 72%">金</i><i style="width:9.65px">&nbsp;</i><i style="width:9.65px">2</i><i style="width:9.65px">6</i><i style="width:9.65px">/</i><i style="width:9.65px">1</i><i style="width:9.65px">2</i><i style="width:9.65px">&nbsp;</i><i style="width:9.65px">1</i><i style="width:9.65px">0</i><i style="width:9.65px">,</i><i style="width:9.65px">2</i><i style="width:9.65px">6</i><i style="width:9.65px">9</i><i style="width:19.30px;transform:scale(2.0194,1.3198);transform-origin:50% 62%;-webkit-text-stroke:0">×</i><i style="width:9.65px">1</i><i style="width:9.65px">.</i><i style="width:9.65px">0</i><i style="width:9.65px">0</i><i style="width:9.65px">]</i><i style="width:9.65px">&nbsp;</i><i style="width:19.30px;transform:scale(1.3028,0.8515);transform-origin:50% 72%">終</i><i style="width:19.30px;transform:scale(1.3028,0.8515);transform-origin:50% 72%">値</i><i style="width:9.65px">&nbsp;</i><i style="width:19.30px;transform:scale(1.3028,0.8515);transform-origin:50% 72%">時</i><i style="width:19.30px;transform:scale(1.3028,0.8515);transform-origin:50% 72%">刻</i><i style="width:9.65px">:</i><i style="width:9.65px">0</i><i style="width:9.65px">6</i><i style="width:9.65px">:</i><i style="width:9.65px">0</i><i style="width:9.65px">0</i><i style="width:9.65px">&nbsp;</i><i style="width:9.65px">1</i><i style="width:9.65px">5</i><i style="width:9.65px">,</i><i style="width:9.65px">9</i><i style="width:9.65px">5</i><i style="width:9.65px">4</i></div><div class="a" style="left:3.5px;top:1070.3px;width:2001px;height:4.7px;background:linear-gradient(#c4c4c4,#d8d8d8 40%)"></div><div class="a" style="left:0;top:1075px;width:2006.5px;height:2px;background:#a8a8a8"></div><div class="a" style="left:0;top:1077px;width:2009px;height:3px;background:#fff"></div><div class="a" style="left:0;top:1070px;width:1.5px;height:7px;background:#aaa"></div><div class="a" style="left:1.5px;top:1070px;width:2px;height:7px;background:#888"></div></body></html>
